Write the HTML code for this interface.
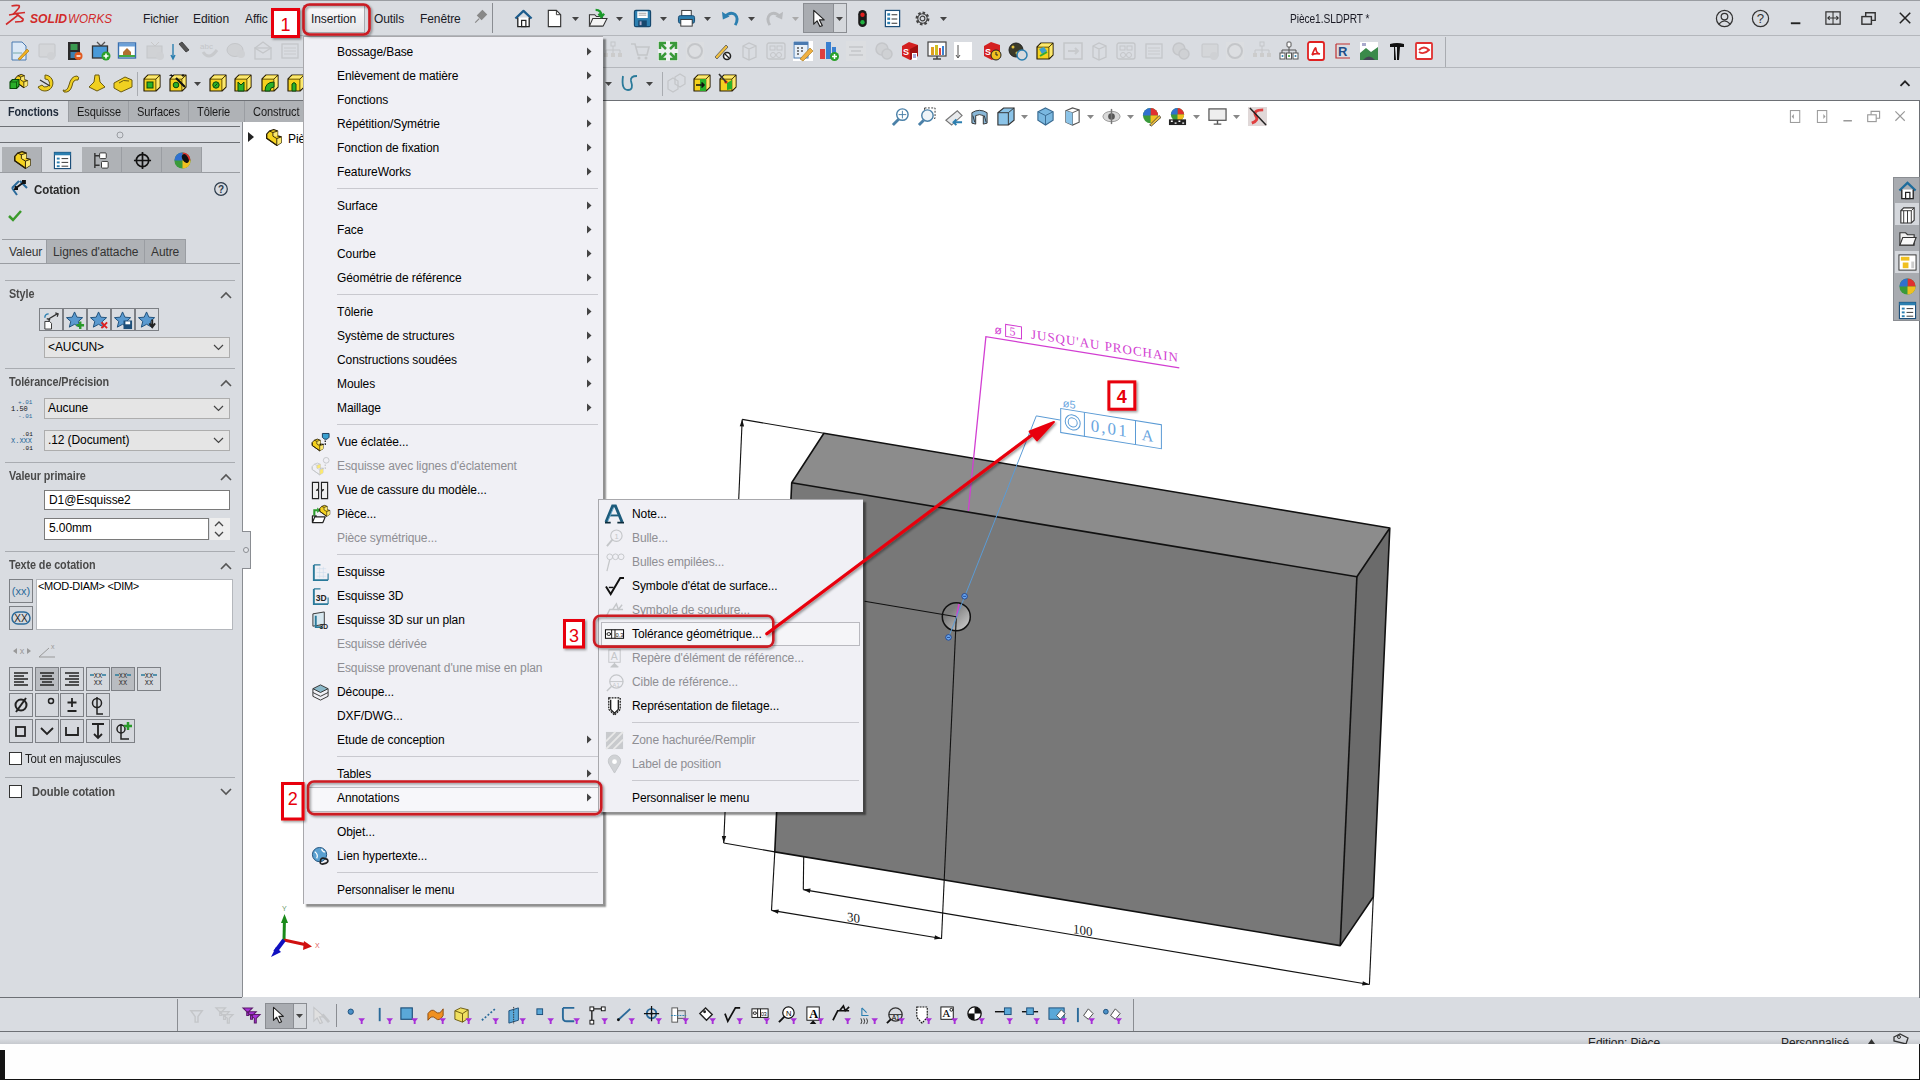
<!DOCTYPE html><html><head><meta charset="utf-8"><style>
html,body{margin:0;padding:0;width:1920px;height:1080px;overflow:hidden;background:#d9dce1;}
body{position:relative;font-family:"Liberation Sans",sans-serif;font-size:12px;color:#000;}
.t{position:absolute;white-space:nowrap;line-height:16px;letter-spacing:-0.1px;}
.b{font-weight:bold;}
svg{position:absolute;overflow:visible;}
</style></head><body>
<div style="position:absolute;left:0px;top:0px;width:1920px;height:1px;background:#9a9da2"></div>
<div style="position:absolute;left:0px;top:35px;width:1920px;height:1px;background:#b4b7bc"></div>
<div style="position:absolute;left:0px;top:67px;width:1920px;height:1px;background:#b4b7bc"></div>
<div style="position:absolute;left:0px;top:100px;width:1920px;height:1px;background:#6d7075"></div>
<div class="t" style="left:143px;top:10.84px;font-size:12px;color:#1a1a24">Fichier</div>
<div class="t" style="left:193px;top:10.84px;font-size:12px;color:#1a1a24">Edition</div>
<div class="t" style="left:245px;top:10.84px;font-size:12px;color:#1a1a24">Affic</div>
<div class="t" style="left:374px;top:10.84px;font-size:12px;color:#1a1a24">Outils</div>
<div class="t" style="left:420px;top:10.84px;font-size:12px;color:#1a1a24">Fenêtre</div>
<div class="t" style="left:1290px;top:10.84px;font-size:12px;color:#1a1a24;transform:scaleX(0.85);transform-origin:0 0">Pièce1.SLDPRT *</div>
<svg style="left:0px;top:0px;" width="120" height="35" viewBox="0 0 120 35"><path d="M11.5 6 Q15 5 19 5.5 Q20 7 18 9 L13 14.5" fill="none" stroke="#d12a2a" stroke-width="1.6"/>
<path d="M9 15 L17 13.5 Q18.5 14 17 16 L6 24.5" fill="none" stroke="#d12a2a" stroke-width="1.6"/>
<path d="M25 12.5 L16 13.5 L23 19 Q23.5 21 21 21.5 L15 22" fill="none" stroke="#d12a2a" stroke-width="1.7"/>
<text x="30" y="23" font-family="Liberation Sans" font-weight="bold" font-style="italic" font-size="12.5" fill="#d12a2a" textLength="37" lengthAdjust="spacingAndGlyphs">SOLID</text>
<text x="68" y="23" font-family="Liberation Sans" font-style="italic" font-size="12.5" fill="#d12a2a" textLength="44" lengthAdjust="spacingAndGlyphs">WORKS</text></svg>
<div style="position:absolute;left:243px;top:101px;width:1676px;height:896px;background:#fff"></div>
<div style="position:absolute;left:1919px;top:101px;width:1px;height:897px;background:#6d7075"></div>
<svg style="left:0;top:0" width="1920" height="1080" viewBox="0 0 1920 1080"><polygon points="823.9,433.3 1389.8,528.0 1356.9,576.7 791.7,482.8" fill="#8c8c8c"/><polygon points="791.7,482.8 1356.9,576.7 1340.2,945.6 774.8,851.9" fill="#787878"/><polygon points="1356.9,576.7 1389.8,528.0 1373.3,897.0 1340.2,945.6" fill="#6b6b6b"/><polyline points="791.7,482.8 823.9,433.3 1389.8,528.0 1373.3,897.0 1340.2,945.6 774.8,851.9 791.7,482.8 1356.9,576.7 1389.8,528.0" fill="none" stroke="#111" stroke-width="1.6" stroke-linejoin="round"/><line x1="1356.9" y1="576.7" x2="1340.2" y2="945.6" stroke="#111" stroke-width="1.6"/><defs><linearGradient id="cg" x1="0" y1="0" x2="1" y2="1"><stop offset="0.3" stop-color="#7c7c7c"/><stop offset="1" stop-color="#d4d4d4"/></linearGradient></defs><circle cx="956.3" cy="616.7" r="14" fill="url(#cg)" stroke="#111" stroke-width="1.5"/><polyline points="968.3,511 985.9,336.7 1179.3,367.8" fill="none" stroke="#d23ed2" stroke-width="1.3"/><line x1="956.5" y1="617" x2="959" y2="604" stroke="#d23ed2" stroke-width="1.5"/><g transform="translate(994,337.5) skewY(9.13)"><text x="0.5" y="-4" font-family="Liberation Sans" font-size="12" fill="#d23ed2">ø</text><rect x="11.6" y="-15" width="15.9" height="12" fill="none" stroke="#d23ed2" stroke-width="1"/><text x="15.5" y="-5" font-family="Liberation Serif" font-size="12" fill="#d23ed2">5</text><text x="37" y="-5" font-family="Liberation Serif" font-size="13" fill="#d23ed2" textLength="147" lengthAdjust="spacing">JUSQU'AU  PROCHAIN</text></g><line x1="823.9" y1="433.3" x2="742.2" y2="419.4" stroke="#111" stroke-width="1.1"/><line x1="742.2" y1="419.4" x2="723.7" y2="843" stroke="#111" stroke-width="1.1"/><line x1="723.7" y1="843" x2="774.8" y2="851.9" stroke="#111" stroke-width="1.1"/><polygon points="742.2,419.4 744.1,426.5 739.7,426.3" fill="#111"/><polygon points="723.7,843.0 721.8,835.9 726.2,836.1" fill="#111"/><line x1="774.8" y1="851.9" x2="771.5" y2="910.4" stroke="#111" stroke-width="1.1"/><line x1="771.5" y1="910.4" x2="941.5" y2="938.5" stroke="#111" stroke-width="1.1"/><polygon points="771.5,910.4 778.8,909.4 778.0,913.7" fill="#111"/><polygon points="941.5,938.5 934.2,939.5 935.0,935.2" fill="#111"/><line x1="956.3" y1="616.7" x2="941.5" y2="939" stroke="#111" stroke-width="1.1"/><line x1="803.7" y1="857" x2="803.3" y2="889.6" stroke="#111" stroke-width="1.1"/><line x1="803.3" y1="889.6" x2="1369.4" y2="984.5" stroke="#111" stroke-width="1.1"/><polygon points="803.3,889.6 810.6,888.6 809.8,892.9" fill="#111"/><polygon points="1369.4,984.5 1362.1,985.5 1362.9,981.2" fill="#111"/><line x1="1373.3" y1="897" x2="1369.4" y2="984.5" stroke="#111" stroke-width="1.1"/><line x1="864.6" y1="601.3" x2="956.3" y2="616.7" stroke="#111" stroke-width="1.1"/><text transform="translate(847,921) skewY(9.4)" font-family="Liberation Serif" font-size="13" fill="#222">30</text><text transform="translate(1073,933) skewY(9.4)" font-family="Liberation Serif" font-size="13" fill="#222">100</text><polyline points="948.5,637.4 1036.3,415.9 1060,420" fill="none" stroke="#5b9bd5" stroke-width="1"/><circle cx="964.6" cy="596.3" r="2.8" fill="#6aa8f0" stroke="#1d3f8a" stroke-width="0.9"/><line x1="963.1" y1="596.3" x2="966.1" y2="596.3" stroke="#1d3f8a" stroke-width="0.9"/><circle cx="948.5" cy="637.4" r="2.8" fill="#6aa8f0" stroke="#1d3f8a" stroke-width="0.9"/><line x1="947.0" y1="637.4" x2="950.0" y2="637.4" stroke="#1d3f8a" stroke-width="0.9"/><g transform="translate(1060.7,408.5) skewY(9.19)"><rect x="0" y="0" width="100.7" height="24" fill="none" stroke="#5b9bd5" stroke-width="1"/><line x1="23.7" y1="0" x2="23.7" y2="24" stroke="#5b9bd5"/><line x1="74.8" y1="0" x2="74.8" y2="24" stroke="#5b9bd5"/><circle cx="12" cy="12" r="7.5" fill="none" stroke="#5b9bd5"/><circle cx="12" cy="12" r="4.5" fill="none" stroke="#5b9bd5"/><text x="30" y="17.6" font-family="Liberation Serif" font-size="17" fill="#6aa6e0" textLength="36" lengthAdjust="spacing">0,01</text><text x="81" y="18.3" font-family="Liberation Serif" font-size="16" fill="#6aa6e0">A</text><text x="2" y="-2" font-family="Liberation Sans" font-size="11" fill="#6aa6e0">ø5</text></g><line x1="284" y1="940" x2="284.5" y2="918" stroke="#1a8a1a" stroke-width="3"/><polygon points="284.5,914 281,923 288,923" fill="#1a8a1a"/><line x1="284" y1="940" x2="307" y2="945" stroke="#d01010" stroke-width="3"/><polygon points="312,946.5 304,941 303,950" fill="#d01010"/><line x1="284" y1="940" x2="275" y2="952" stroke="#1010c0" stroke-width="4"/><polygon points="271,957 276,947 281,952" fill="#1010c0"/><text x="282" y="911" font-family="Liberation Sans" font-size="7" fill="#6a9a6a">Y</text><text x="315" y="948" font-family="Liberation Sans" font-size="7" fill="#e06060">X</text></svg>
<div style="position:absolute;left:0px;top:101px;width:243px;height:896px;background:#d9dce1"></div>
<div style="position:absolute;left:242px;top:122px;width:1px;height:875px;background:#8a8d92"></div>
<div style="position:absolute;left:242px;top:531px;width:9px;height:38px;background:#d9dce1;border:1px solid #8a8d92;border-left:none;box-sizing:border-box"></div>
<svg style="left:243px;top:547px;" width="6" height="6" viewBox="0 0 6 6"><circle cx="3" cy="3" r="2.5" fill="#e4e6ea" stroke="#8a8d92"/></svg>
<div class="t" style="left:8px;top:104.34px;font-size:12px;color:#1f2a3a;font-weight:bold;transform:scaleX(0.9);transform-origin:0 0">Fonctions</div>
<div style="position:absolute;left:68px;top:101px;width:60px;height:21px;background:#afb2b6;border-left:1px solid #9a9da2;box-sizing:border-box"></div>
<div class="t" style="left:77px;top:104.34px;font-size:12px;color:#1a1a1a;transform:scaleX(0.92);transform-origin:0 0">Esquisse</div>
<div style="position:absolute;left:128px;top:101px;width:60px;height:21px;background:#afb2b6;border-left:1px solid #9a9da2;box-sizing:border-box"></div>
<div class="t" style="left:137px;top:104.34px;font-size:12px;color:#1a1a1a;transform:scaleX(0.92);transform-origin:0 0">Surfaces</div>
<div style="position:absolute;left:188px;top:101px;width:56px;height:21px;background:#afb2b6;border-left:1px solid #9a9da2;box-sizing:border-box"></div>
<div class="t" style="left:197px;top:104.34px;font-size:12px;color:#1a1a1a;transform:scaleX(0.92);transform-origin:0 0">Tôlerie</div>
<div style="position:absolute;left:244px;top:101px;width:70px;height:21px;background:#afb2b6;border-left:1px solid #9a9da2;box-sizing:border-box"></div>
<div class="t" style="left:253px;top:104.34px;font-size:12px;color:#1a1a1a;transform:scaleX(0.92);transform-origin:0 0">Construct</div>
<svg style="left:247px;top:132px;" width="8" height="10" viewBox="0 0 8 10"><path d="M1 0 L7 5 L1 10 Z" fill="#222"/></svg>
<div class="t" style="left:288px;top:130.84px;font-size:12px;">Piè</div>
<div style="position:absolute;left:0px;top:126px;width:240px;height:1px;background:#6d7075"></div>
<svg style="left:116px;top:131px;" width="8" height="8" viewBox="0 0 8 8"><circle cx="4" cy="4" r="3" fill="none" stroke="#9a9da2"/></svg>
<div style="position:absolute;left:0px;top:142px;width:240px;height:1px;background:#6d7075"></div>
<div style="position:absolute;left:2px;top:147px;width:40px;height:26px;background:#afb2b6;border-right:1px solid #9a9da2;box-sizing:border-box"></div>
<div style="position:absolute;left:82px;top:147px;width:40px;height:26px;background:#afb2b6;border-right:1px solid #9a9da2;box-sizing:border-box"></div>
<div style="position:absolute;left:122px;top:147px;width:40px;height:26px;background:#afb2b6;border-right:1px solid #9a9da2;box-sizing:border-box"></div>
<div style="position:absolute;left:162px;top:147px;width:40px;height:26px;background:#afb2b6;border-right:1px solid #9a9da2;box-sizing:border-box"></div>
<div style="position:absolute;left:0px;top:172px;width:240px;height:1px;background:#9a9da2"></div>
<div class="t" style="left:34px;top:181.84px;font-size:12px;color:#2a2a2a;font-weight:bold;transform:scaleX(0.96);transform-origin:0 0">Cotation</div>
<svg style="left:214px;top:182px;" width="14" height="14" viewBox="0 0 14 14"><circle cx="7" cy="7" r="6.3" fill="none" stroke="#2b3a4a" stroke-width="1.2"/><text x="7" y="11" text-anchor="middle" font-family="Liberation Sans" font-weight="bold" font-size="10" fill="#2b3a4a">?</text></svg>
<svg style="left:8px;top:209px;" width="14" height="13" viewBox="0 0 14 13"><path d="M1 7 L5 11 L13 2" fill="none" stroke="#3a9a2a" stroke-width="2.5"/></svg>
<div style="position:absolute;left:0px;top:263px;width:240px;height:1px;background:#9a9da2"></div>
<div style="position:absolute;left:46px;top:239px;width:99px;height:24px;background:#afb2b6;border-left:1px solid #9a9da2;border-right:1px solid #9a9da2;border-top:1px solid #9a9da2;box-sizing:border-box"></div>
<div style="position:absolute;left:145px;top:239px;width:41px;height:24px;background:#afb2b6;border-right:1px solid #9a9da2;border-top:1px solid #9a9da2;box-sizing:border-box"></div>
<div style="position:absolute;left:2px;top:239px;width:44px;height:1px;background:#9a9da2"></div>
<div class="t" style="left:9px;top:243.84px;font-size:12px;color:#333">Valeur</div>
<div class="t" style="left:53px;top:243.84px;font-size:12px;color:#333">Lignes d'attache</div>
<div class="t" style="left:151px;top:243.84px;font-size:12px;color:#333">Autre</div>
<div style="position:absolute;left:5px;top:280px;width:230px;height:1px;background:#a9acb1"></div>
<div class="t" style="left:9px;top:286.34px;font-size:12px;color:#4a4a4a;font-weight:bold;transform:scaleX(0.9);transform-origin:0 0">Style</div>
<svg style="left:220px;top:290.5px;" width="12" height="8" viewBox="0 0 12 8"><path d="M1 7 L6 2 L11 7" fill="none" stroke="#555" stroke-width="1.6"/></svg>
<div style="position:absolute;left:5px;top:368px;width:230px;height:1px;background:#a9acb1"></div>
<div class="t" style="left:9px;top:374.34px;font-size:12px;color:#4a4a4a;font-weight:bold;transform:scaleX(0.9);transform-origin:0 0">Tolérance/Précision</div>
<svg style="left:220px;top:378.5px;" width="12" height="8" viewBox="0 0 12 8"><path d="M1 7 L6 2 L11 7" fill="none" stroke="#555" stroke-width="1.6"/></svg>
<div style="position:absolute;left:5px;top:462px;width:230px;height:1px;background:#a9acb1"></div>
<div class="t" style="left:9px;top:468.34px;font-size:12px;color:#4a4a4a;font-weight:bold;transform:scaleX(0.9);transform-origin:0 0">Valeur primaire</div>
<svg style="left:220px;top:472.5px;" width="12" height="8" viewBox="0 0 12 8"><path d="M1 7 L6 2 L11 7" fill="none" stroke="#555" stroke-width="1.6"/></svg>
<div style="position:absolute;left:5px;top:551px;width:230px;height:1px;background:#a9acb1"></div>
<div class="t" style="left:9px;top:557.34px;font-size:12px;color:#4a4a4a;font-weight:bold;transform:scaleX(0.9);transform-origin:0 0">Texte de cotation</div>
<svg style="left:220px;top:561.5px;" width="12" height="8" viewBox="0 0 12 8"><path d="M1 7 L6 2 L11 7" fill="none" stroke="#555" stroke-width="1.6"/></svg>
<div style="position:absolute;left:5px;top:777px;width:230px;height:1px;background:#a9acb1"></div>
<div class="t" style="left:9px;top:781.34px;font-size:12px;color:#4a4a4a;font-weight:bold;transform:scaleX(0.9);transform-origin:0 0"></div>
<svg style="left:220px;top:787.5px;" width="12" height="8" viewBox="0 0 12 8"><path d="M1 1 L6 6 L11 1" fill="none" stroke="#555" stroke-width="1.6"/></svg>
<div class="t" style="left:32px;top:783.84px;font-size:12px;color:#4a4a4a;font-weight:bold;transform:scaleX(0.93);transform-origin:0 0">Double cotation</div>
<div style="position:absolute;left:39px;top:308px;width:24px;height:23px;background:#d9dce1;border:1px solid #7d8085;box-sizing:border-box"></div>
<div style="position:absolute;left:63px;top:308px;width:24px;height:23px;background:#d9dce1;border:1px solid #7d8085;box-sizing:border-box"></div>
<div style="position:absolute;left:87px;top:308px;width:24px;height:23px;background:#d9dce1;border:1px solid #7d8085;box-sizing:border-box"></div>
<div style="position:absolute;left:111px;top:308px;width:24px;height:23px;background:#d9dce1;border:1px solid #7d8085;box-sizing:border-box"></div>
<div style="position:absolute;left:135px;top:308px;width:24px;height:23px;background:#d9dce1;border:1px solid #7d8085;box-sizing:border-box"></div>
<div style="position:absolute;left:44px;top:337px;width:186px;height:21px;background:#e5e5e5;border:1px solid #adadad;box-sizing:border-box"></div>
<div class="t" style="left:48px;top:339.34px;font-size:12px;color:#000">&lt;AUCUN&gt;</div>
<svg style="left:213px;top:344px;" width="11" height="7" viewBox="0 0 11 7"><path d="M1 1 L5.5 5.5 L10 1" fill="none" stroke="#444" stroke-width="1.2"/></svg>
<div style="position:absolute;left:44px;top:398px;width:186px;height:21px;background:#e5e5e5;border:1px solid #adadad;box-sizing:border-box"></div>
<div class="t" style="left:48px;top:400.34px;font-size:12px;color:#000">Aucune</div>
<svg style="left:213px;top:405px;" width="11" height="7" viewBox="0 0 11 7"><path d="M1 1 L5.5 5.5 L10 1" fill="none" stroke="#444" stroke-width="1.2"/></svg>
<div style="position:absolute;left:44px;top:430px;width:186px;height:21px;background:#e5e5e5;border:1px solid #adadad;box-sizing:border-box"></div>
<div class="t" style="left:48px;top:432.34px;font-size:12px;color:#000">.12 (Document)</div>
<svg style="left:213px;top:437px;" width="11" height="7" viewBox="0 0 11 7"><path d="M1 1 L5.5 5.5 L10 1" fill="none" stroke="#444" stroke-width="1.2"/></svg>
<div style="position:absolute;left:44px;top:490px;width:186px;height:20px;background:#fff;border:1px solid #7a7a7a;box-sizing:border-box"></div>
<div class="t" style="left:49px;top:491.84px;font-size:12px;">D1@Esquisse2</div>
<div style="position:absolute;left:44px;top:518px;width:165px;height:22px;background:#fff;border:1px solid #7a7a7a;box-sizing:border-box"></div>
<div class="t" style="left:49px;top:520.34px;font-size:12px;">5.00mm</div>
<div style="position:absolute;left:210px;top:518px;width:20px;height:22px;background:#eeeeee"></div>
<svg style="left:213px;top:520px;" width="12" height="18" viewBox="0 0 12 18"><path d="M2 6 L6 2 L10 6 M2 12 L6 16 L10 12" fill="none" stroke="#444" stroke-width="1.3"/></svg>
<svg style="left:10px;top:398px;" width="22" height="20" viewBox="0 0 22 20"><text x="8" y="6" font-family="Liberation Mono" font-size="6" fill="#2a6a9a">+.01</text><text x="1" y="13" font-family="Liberation Mono" font-size="7" fill="#111">1.50</text><text x="8" y="20" font-family="Liberation Mono" font-size="6" fill="#2a6a9a">-.01</text></svg>
<svg style="left:10px;top:430px;" width="22" height="20" viewBox="0 0 22 20"><text x="12" y="6" font-family="Liberation Mono" font-size="6" fill="#111">.01</text><text x="1" y="13" font-family="Liberation Mono" font-size="7" fill="#2a6a9a">X.XXX</text><text x="12" y="20" font-family="Liberation Mono" font-size="6" fill="#111">.01</text></svg>
<div style="position:absolute;left:9px;top:579px;width:24px;height:24px;background:#d5d8dd;border:1px solid #7d8085;box-sizing:border-box"></div>
<div style="position:absolute;left:9px;top:606px;width:24px;height:24px;background:#d5d8dd;border:1px solid #7d8085;box-sizing:border-box"></div>
<svg style="left:11px;top:583px;" width="20" height="16" viewBox="0 0 20 16"><text x="10" y="12" text-anchor="middle" font-family="Liberation Sans" font-size="11" fill="#2a6a9a">(xx)</text></svg>
<svg style="left:11px;top:610px;" width="20" height="16" viewBox="0 0 20 16"><rect x="1" y="2" width="18" height="12" rx="6" fill="none" stroke="#2a6a9a" stroke-width="1.5"/><text x="10" y="12" text-anchor="middle" font-family="Liberation Sans" font-size="10" fill="#222">XX</text></svg>
<div style="position:absolute;left:36px;top:579px;width:197px;height:51px;background:#fff;border:1px solid #b4b7bc;box-sizing:border-box"></div>
<div class="t" style="left:38px;top:578.19px;font-size:11px;font-size:11px;letter-spacing:-0.3px">&lt;MOD-DIAM&gt; &lt;DIM&gt;</div>
<svg style="left:12px;top:645px;" width="20" height="12" viewBox="0 0 20 12"><path d="M1 6 L5 3 L5 9 Z M19 6 L15 3 L15 9 Z" fill="#999"/><text x="10" y="9" text-anchor="middle" font-family="Liberation Sans" font-size="9" fill="#999">x</text></svg>
<svg style="left:37px;top:643px;" width="20" height="16" viewBox="0 0 20 16"><path d="M2 14 L18 14 M2 14 L12 5" stroke="#999" fill="none"/><text x="14" y="6" font-family="Liberation Sans" font-size="7" fill="#999">x</text></svg>
<div style="position:absolute;left:9px;top:667px;width:24px;height:24px;background:#d5d8dd;border:1px solid #7d8085;box-sizing:border-box"></div>
<svg style="left:9px;top:667px;" width="24" height="24" viewBox="0 0 24 24"><path d="M5 6h14M5 9h10M5 12h14M5 15h10M5 18h14" stroke="#222" stroke-width="1.5"/></svg>
<div style="position:absolute;left:35px;top:667px;width:24px;height:24px;background:#b9bcc1;border:1px solid #7d8085;box-sizing:border-box"></div>
<svg style="left:35px;top:667px;" width="24" height="24" viewBox="0 0 24 24"><path d="M5 6h14M7 9h10M5 12h14M7 15h10M5 18h14" stroke="#222" stroke-width="1.5"/></svg>
<div style="position:absolute;left:60px;top:667px;width:24px;height:24px;background:#d5d8dd;border:1px solid #7d8085;box-sizing:border-box"></div>
<svg style="left:60px;top:667px;" width="24" height="24" viewBox="0 0 24 24"><path d="M5 6h14M9 9h10M5 12h14M9 15h10M5 18h14" stroke="#222" stroke-width="1.5"/></svg>
<div style="position:absolute;left:86px;top:667px;width:24px;height:24px;background:#d5d8dd;border:1px solid #7d8085;box-sizing:border-box"></div>
<svg style="left:86px;top:667px;" width="24" height="24" viewBox="0 0 24 24"><text x="12" y="11" text-anchor="middle" font-family="Liberation Mono" font-size="7" fill="#333">XX</text><text x="12" y="18" text-anchor="middle" font-family="Liberation Mono" font-size="7" fill="#333">XX</text><path d="M4 8 L8 8 M16 8 L20 8" stroke="#2a7a9a" stroke-width="1.5"/></svg>
<div style="position:absolute;left:111px;top:667px;width:24px;height:24px;background:#b9bcc1;border:1px solid #7d8085;box-sizing:border-box"></div>
<svg style="left:111px;top:667px;" width="24" height="24" viewBox="0 0 24 24"><text x="12" y="11" text-anchor="middle" font-family="Liberation Mono" font-size="7" fill="#333">XX</text><text x="12" y="18" text-anchor="middle" font-family="Liberation Mono" font-size="7" fill="#333">XX</text><path d="M4 8 L8 8 M16 8 L20 8" stroke="#2a7a9a" stroke-width="1.5"/></svg>
<div style="position:absolute;left:137px;top:667px;width:24px;height:24px;background:#d5d8dd;border:1px solid #7d8085;box-sizing:border-box"></div>
<svg style="left:137px;top:667px;" width="24" height="24" viewBox="0 0 24 24"><text x="12" y="11" text-anchor="middle" font-family="Liberation Mono" font-size="7" fill="#333">XX</text><text x="12" y="18" text-anchor="middle" font-family="Liberation Mono" font-size="7" fill="#333">XX</text><path d="M4 8 L8 8 M16 8 L20 8" stroke="#2a7a9a" stroke-width="1.5"/></svg>
<div style="position:absolute;left:9px;top:693px;width:24px;height:24px;background:#d5d8dd;border:1px solid #7d8085;box-sizing:border-box"></div>
<svg style="left:9px;top:693px;" width="24" height="24" viewBox="0 0 24 24"><circle cx="12" cy="12" r="5.5" fill="none" stroke="#222" stroke-width="2"/><path d="M7 19 L17 5" stroke="#222" stroke-width="2"/></svg>
<div style="position:absolute;left:35px;top:693px;width:24px;height:24px;background:#d5d8dd;border:1px solid #7d8085;box-sizing:border-box"></div>
<svg style="left:35px;top:693px;" width="24" height="24" viewBox="0 0 24 24"><circle cx="16" cy="8" r="2.5" fill="none" stroke="#222" stroke-width="1.5"/></svg>
<div style="position:absolute;left:60px;top:693px;width:24px;height:24px;background:#d5d8dd;border:1px solid #7d8085;box-sizing:border-box"></div>
<svg style="left:60px;top:693px;" width="24" height="24" viewBox="0 0 24 24"><path d="M12 5 V14 M7.5 9.5 H16.5 M7.5 18 H16.5" stroke="#222" stroke-width="1.8"/></svg>
<div style="position:absolute;left:86px;top:693px;width:24px;height:24px;background:#d5d8dd;border:1px solid #7d8085;box-sizing:border-box"></div>
<svg style="left:86px;top:693px;" width="24" height="24" viewBox="0 0 24 24"><path d="M11 4 v17 h6" fill="none" stroke="#222" stroke-width="1.5"/><circle cx="11" cy="10" r="4.5" fill="none" stroke="#222" stroke-width="1.5"/></svg>
<div style="position:absolute;left:9px;top:719px;width:24px;height:24px;background:#d5d8dd;border:1px solid #7d8085;box-sizing:border-box"></div>
<svg style="left:9px;top:719px;" width="24" height="24" viewBox="0 0 24 24"><rect x="7" y="8" width="9" height="9" fill="none" stroke="#222" stroke-width="1.8"/></svg>
<div style="position:absolute;left:35px;top:719px;width:24px;height:24px;background:#d5d8dd;border:1px solid #7d8085;box-sizing:border-box"></div>
<svg style="left:35px;top:719px;" width="24" height="24" viewBox="0 0 24 24"><path d="M6 9 L12 15 L18 9" fill="none" stroke="#222" stroke-width="1.8"/></svg>
<div style="position:absolute;left:60px;top:719px;width:24px;height:24px;background:#d5d8dd;border:1px solid #7d8085;box-sizing:border-box"></div>
<svg style="left:60px;top:719px;" width="24" height="24" viewBox="0 0 24 24"><path d="M6 8 V16 H18 V8" fill="none" stroke="#222" stroke-width="1.8"/></svg>
<div style="position:absolute;left:86px;top:719px;width:24px;height:24px;background:#d5d8dd;border:1px solid #7d8085;box-sizing:border-box"></div>
<svg style="left:86px;top:719px;" width="24" height="24" viewBox="0 0 24 24"><path d="M6 5 H18 M12 5 V19 M8 15 L12 19 L16 15" fill="none" stroke="#222" stroke-width="1.8"/></svg>
<div style="position:absolute;left:111px;top:719px;width:24px;height:24px;background:#d5d8dd;border:1px solid #7d8085;box-sizing:border-box"></div>
<svg style="left:111px;top:719px;" width="24" height="24" viewBox="0 0 24 24"><path d="M10 5 v15 h8" fill="none" stroke="#222" stroke-width="1.5"/><circle cx="10" cy="10" r="4" fill="none" stroke="#222" stroke-width="1.5"/><path d="M17 3v8M13 7h8" stroke="#2a9a2a" stroke-width="2.5"/></svg>
<div style="position:absolute;left:9px;top:752px;width:13px;height:13px;background:#fff;border:1px solid #333;box-sizing:border-box"></div>
<div class="t" style="left:25px;top:751.34px;font-size:12px;color:#222;transform:scaleX(0.95);transform-origin:0 0">Tout en majuscules</div>
<div style="position:absolute;left:9px;top:785px;width:13px;height:13px;background:#fff;border:1px solid #333;box-sizing:border-box"></div>
<div style="position:absolute;left:0px;top:998px;width:1920px;height:33px;background:#d9dce1"></div>
<div style="position:absolute;left:0px;top:997px;width:242px;height:1px;background:#6d7075"></div>
<div style="position:absolute;left:0px;top:1031px;width:1920px;height:1px;background:#6d7075"></div>
<div style="position:absolute;left:0px;top:1032px;width:1920px;height:12px;background:linear-gradient(#d9dce1 55%,#c6c9ce)"></div>
<div class="t" style="left:1588px;top:1034.84px;font-size:12px;color:#222">Edition: Pièce</div>
<div class="t" style="left:1781px;top:1034.84px;font-size:12px;color:#222">Personnalisé</div>
<svg style="left:1868px;top:1039px;" width="7" height="5" viewBox="0 0 7 5"><path d="M0 5 L3.5 0 L7 5 Z" fill="#333"/></svg>
<svg style="left:1892px;top:1033px;" width="18" height="12" viewBox="0 0 18 12"><path d="M2 4 L8 1 L16 5 L14 11 L2 8 Z" fill="none" stroke="#333" stroke-width="1.3"/><circle cx="7" cy="4" r="1.5" fill="none" stroke="#333"/></svg>
<div style="position:absolute;left:0px;top:1044px;width:1920px;height:36px;background:#fefefe"></div>
<div style="position:absolute;left:0px;top:1050px;width:5px;height:30px;background:#141414"></div>
<div style="position:absolute;left:0px;top:1079px;width:1920px;height:1px;background:#141414"></div>
<div style="position:absolute;left:1919px;top:1044px;width:1px;height:36px;background:#141414"></div>
<svg style="left:472.0px;top:9.0px;" width="16" height="16" viewBox="0 0 20 20"><path d="M4 17 L9 12 M7 8 L13 2 L18 7 L12 13 Z" fill="#888" stroke="#888" stroke-width="1.5"/></svg>
<div style="position:absolute;left:492px;top:3px;width:1px;height:30px;background:#8a8d92"></div>
<svg style="left:513.5px;top:8.5px;" width="19" height="19" viewBox="0 0 20 20"><path d="M1.5 10 L10 2 L18.5 10" fill="none" stroke="#1d5c8c" stroke-width="2.4" stroke-linejoin="round"/><path d="M4 9 V18.5 H16 V9" fill="#fff" stroke="#222" stroke-width="1.4"/><rect x="8" y="12" width="4.5" height="6.5" fill="none" stroke="#222" stroke-width="1.3"/></svg>
<svg style="left:544.5px;top:8.5px;" width="19" height="19" viewBox="0 0 20 20"><path d="M3.5 1.5 H12 L16.5 6 V18.5 H3.5 Z" fill="#fff" stroke="#333" stroke-width="1.2"/><path d="M12 1.5 V6 H16.5" fill="none" stroke="#333"/></svg>
<svg style="left:587.5px;top:8.5px;" width="19" height="19" viewBox="0 0 20 20"><path d="M1.5 6 H7 L9 8 H15 V18 H1.5 Z" fill="#e8e8e8" stroke="#333" stroke-width="1.1"/><path d="M1.5 18 L5 10 H20 L16 18 Z" fill="#f4f4f4" stroke="#333" stroke-width="1.1"/><path d="M8 1 Q14 1 14 7 M11 5 L14 8.5 L17 5" fill="none" stroke="#1a9a2a" stroke-width="2.3"/></svg>
<svg style="left:632.5px;top:8.5px;" width="19" height="19" viewBox="0 0 20 20"><rect x="1.5" y="1.5" width="17" height="17" rx="1.5" fill="#2c7fb0" stroke="#16486e" stroke-width="1.2"/><rect x="4.5" y="2.5" width="11" height="7" fill="#fff"/><path d="M6 4.5h8M6 6.5h8" stroke="#888" stroke-width="0.8"/><rect x="5.5" y="12" width="9" height="6" fill="#16486e"/><rect x="7" y="13" width="2" height="4" fill="#aac"/></svg>
<svg style="left:676.5px;top:8.5px;" width="19" height="19" viewBox="0 0 20 20"><rect x="5" y="1.5" width="10" height="6" fill="#fff" stroke="#333"/><rect x="1.5" y="7" width="17" height="8" rx="2" fill="#2c7fb0" stroke="#16486e"/><rect x="4" y="11" width="12" height="7" fill="#fff" stroke="#333"/></svg>
<svg style="left:720.5px;top:8.5px;" width="19" height="19" viewBox="0 0 20 20"><path d="M4 8 Q10 2 15 6 Q19 10 15 17" fill="none" stroke="#2c7fb0" stroke-width="3"/><path d="M1 3 L2 11 L9 8 Z" fill="#2c7fb0"/></svg>
<svg style="left:764.5px;top:8.5px;" width="19" height="19" viewBox="0 0 20 20"><path d="M16 8 Q10 2 5 6 Q1 10 5 17" fill="none" stroke="#b9bbbe" stroke-width="3"/><path d="M19 3 L18 11 L11 8 Z" fill="#b9bbbe"/></svg>
<svg style="left:571.5px;top:17.0px" width="7" height="4" viewBox="0 0 7 4"><path d="M0 0 H7 L3.5 4 Z" fill="#444"/></svg>
<svg style="left:615.5px;top:17.0px" width="7" height="4" viewBox="0 0 7 4"><path d="M0 0 H7 L3.5 4 Z" fill="#444"/></svg>
<svg style="left:659.5px;top:17.0px" width="7" height="4" viewBox="0 0 7 4"><path d="M0 0 H7 L3.5 4 Z" fill="#444"/></svg>
<svg style="left:703.5px;top:17.0px" width="7" height="4" viewBox="0 0 7 4"><path d="M0 0 H7 L3.5 4 Z" fill="#444"/></svg>
<svg style="left:747.5px;top:17.0px" width="7" height="4" viewBox="0 0 7 4"><path d="M0 0 H7 L3.5 4 Z" fill="#444"/></svg>
<svg style="left:791.5px;top:17.0px" width="7" height="4" viewBox="0 0 7 4"><path d="M0 0 H7 L3.5 4 Z" fill="#aaa"/></svg>
<div style="position:absolute;left:803px;top:3px;width:44px;height:30px;background:#d5d8dc;border:1px solid #8a8d92;box-sizing:border-box"></div>
<div style="position:absolute;left:804px;top:4px;width:30px;height:28px;background:#a9acb1"></div>
<div style="position:absolute;left:833px;top:4px;width:1px;height:28px;background:#8a8d92"></div>
<svg style="left:808.5px;top:8.5px;" width="19" height="19" viewBox="0 0 20 20"><path d="M5 1.5 V16 L8.5 12.5 L11.5 18.5 L14 17.5 L11 11.5 H16 Z" fill="#fff" stroke="#222" stroke-width="1.2" stroke-linejoin="round"/></svg>
<svg style="left:835.5px;top:17.0px" width="7" height="4" viewBox="0 0 7 4"><path d="M0 0 H7 L3.5 4 Z" fill="#444"/></svg>
<svg style="left:852.5px;top:8.5px;" width="19" height="19" viewBox="0 0 20 20"><rect x="5.5" y="1" width="9" height="18" rx="4.5" fill="#1a1a1a"/><circle cx="10" cy="6" r="2.3" fill="#e02020"/><circle cx="10" cy="14" r="2.3" fill="#20b040"/></svg>
<svg style="left:882.5px;top:8.5px;" width="19" height="19" viewBox="0 0 20 20"><rect x="2.5" y="1.5" width="15" height="17" fill="#fff" stroke="#1d4f7a" stroke-width="1.3"/><rect x="4.5" y="4.5" width="3" height="2.5" fill="#2c7fb0"/><rect x="4.5" y="9" width="3" height="2.5" fill="#2c7fb0"/><rect x="4.5" y="13.5" width="3" height="2.5" fill="#2c7fb0"/><path d="M9 6h6M9 10.5h6M9 15h6" stroke="#333" stroke-width="1.2"/></svg>
<svg style="left:912.5px;top:8.5px;" width="19" height="19" viewBox="0 0 20 20"><circle cx="10" cy="10" r="6" fill="none" stroke="#444" stroke-width="2.6" stroke-dasharray="2.6 2"/><circle cx="10" cy="10" r="5" fill="none" stroke="#444" stroke-width="1.2"/><circle cx="10" cy="10" r="2.5" fill="none" stroke="#444" stroke-width="1.2"/></svg>
<svg style="left:939.5px;top:17.0px" width="7" height="4" viewBox="0 0 7 4"><path d="M0 0 H7 L3.5 4 Z" fill="#444"/></svg>
<svg style="left:1714.5px;top:8.5px;" width="19" height="19" viewBox="0 0 20 20"><circle cx="10" cy="10" r="8.5" fill="none" stroke="#333" stroke-width="1.3"/><circle cx="10" cy="8" r="3.5" fill="none" stroke="#333" stroke-width="1.3"/><path d="M4 16 Q10 9 16 16" fill="none" stroke="#333" stroke-width="1.3"/></svg>
<svg style="left:1750.5px;top:8.5px;" width="19" height="19" viewBox="0 0 20 20"><circle cx="10" cy="10" r="8.5" fill="none" stroke="#333" stroke-width="1.3"/><text x="10" y="15" text-anchor="middle" font-family="Liberation Sans" font-size="14" fill="#333">?</text></svg>
<svg style="left:1787.5px;top:8.5px;" width="19" height="19" viewBox="0 0 20 20"><path d="M3 15 H13" stroke="#222" stroke-width="2"/></svg>
<svg style="left:1823.5px;top:8.5px;" width="19" height="19" viewBox="0 0 20 20"><rect x="2" y="3" width="15" height="13" fill="none" stroke="#333" stroke-width="1.3"/><path d="M9.5 3 V16 M4 9.5 H15 M6 7.5 L4 9.5 L6 11.5 M13 7.5 L15 9.5 L13 11.5" fill="none" stroke="#333" stroke-width="1.1"/></svg>
<svg style="left:1859.5px;top:8.5px;" width="19" height="19" viewBox="0 0 20 20"><rect x="2" y="8" width="10" height="8" fill="none" stroke="#333" stroke-width="1.5"/><path d="M6 8 V4 H16 V12 H12" fill="none" stroke="#333" stroke-width="1.5"/></svg>
<svg style="left:1895.5px;top:8.5px;" width="19" height="19" viewBox="0 0 20 20"><path d="M4 4 L15 15 M15 4 L4 15" stroke="#222" stroke-width="1.6"/></svg>
<div style="position:absolute;left:303px;top:5px;width:62px;height:28px;background:linear-gradient(#fbfbfc,#e4e5e8);border:1px solid #a8abb0;box-sizing:border-box"></div>
<div class="t" style="left:311px;top:10.84px;font-size:12px;color:#1a1a24">Insertion</div>
<svg style="left:10.0px;top:41.0px;" width="20" height="20" viewBox="0 0 20 20"><path d="M2 1 H12 L16 5 V19 H2 Z" fill="#dbe8f6" stroke="#4a7ab0"/><path d="M3 12 H12" stroke="#7aa"/><path d="M8 18 L17 8 L19 10 L10 19 Z" fill="#f0b020" stroke="#a07010" stroke-width="0.6"/></svg>
<svg style="left:37.0px;top:41.0px;" width="20" height="20" viewBox="0 0 20 20"><rect x="2" y="3" width="16" height="13" rx="1" fill="#d4d6d9" stroke="#c4c6c9"/><circle cx="14" cy="15" r="4" fill="#cfd1d4"/></svg>
<svg style="left:64.0px;top:41.0px;" width="20" height="20" viewBox="0 0 20 20"><rect x="4" y="1" width="12" height="18" fill="#2a2a2a"/><rect x="6.5" y="3" width="7" height="6" fill="#3a9a50"/><rect x="6.5" y="11" width="7" height="6" fill="#3a80b0"/><circle cx="14.5" cy="15" r="4" fill="#e05a20"/><path d="M12.5 15h4" stroke="#fff" stroke-width="1.5"/></svg>
<svg style="left:91.0px;top:41.0px;" width="20" height="20" viewBox="0 0 20 20"><path d="M6 1 L10 5 L14 1" stroke="#555" fill="none" stroke-width="1.3"/><rect x="1.5" y="5" width="15" height="12" fill="#4a9ad8" stroke="#333" stroke-width="1.3"/><circle cx="15" cy="15" r="4.5" fill="#2aa02a"/><path d="M12.5 15h5M15 12.5v5" stroke="#fff" stroke-width="1.6"/></svg>
<svg style="left:117.0px;top:41.0px;" width="20" height="20" viewBox="0 0 20 20"><rect x="1.5" y="2" width="17" height="15" fill="#fff" stroke="#3a70b0" stroke-width="1.4"/><rect x="2" y="2.5" width="16" height="3" fill="#6aa0d8"/><path d="M6 11 L10 7 L14 11 V15 H6 Z" fill="#b07030"/><path d="M2 15 H18" stroke="#4a4" stroke-width="2"/></svg>
<svg style="left:145.0px;top:41.0px;" width="20" height="20" viewBox="0 0 20 20"><path d="M6 1 L10 5 L14 1" stroke="#c8c8c8" fill="none"/><rect x="2" y="5" width="15" height="12" fill="#d0d2d5" stroke="#c4c6c9"/><circle cx="15" cy="15" r="4" fill="#cfd1d4"/></svg>
<svg style="left:170.0px;top:41.0px;" width="20" height="20" viewBox="0 0 20 20"><path d="M3 3 V17 M1 14 L3 18 L5 14" stroke="#2c7fb0" fill="none" stroke-width="1.4"/><path d="M9 3 L12 1 L19 9 L16 11 Z" fill="#555" stroke="#333" stroke-width="0.8"/></svg>
<svg style="left:199.0px;top:41.0px;" width="20" height="20" viewBox="0 0 20 20"><text x="1" y="8" font-family="Liberation Sans" font-size="8" fill="#c4c6c9">abc</text><path d="M4 11 Q10 20 18 9" fill="none" stroke="#c8cacd" stroke-width="3"/></svg>
<svg style="left:226.0px;top:41.0px;" width="20" height="20" viewBox="0 0 20 20"><ellipse cx="9" cy="9" rx="8" ry="6.5" fill="#d0d2d5" stroke="#c4c6c9"/><circle cx="15" cy="13" r="4" fill="#cfd1d4"/></svg>
<svg style="left:253.0px;top:41.0px;" width="20" height="20" viewBox="0 0 20 20"><rect x="2" y="7" width="16" height="11" fill="none" stroke="#c4c6c9" stroke-width="1.3"/><path d="M2 7 L10 1 L18 7 L10 12 Z" fill="none" stroke="#c4c6c9" stroke-width="1.3"/></svg>
<svg style="left:280.0px;top:41.0px;" width="20" height="20" viewBox="0 0 20 20"><rect x="2" y="3" width="16" height="14" fill="none" stroke="#c4c6c9" stroke-width="1.3"/><path d="M4 7h12M4 10h12M4 13h12" stroke="#c8cacd"/></svg>
<svg style="left:603.0px;top:41.0px;" width="20" height="20" viewBox="0 0 20 20"><rect x="8" y="1" width="4" height="4" fill="none" stroke="#c4c6c9"/><path d="M10 5V9 M3 9H17 M3 9V12 M10 9V12 M17 9V12" stroke="#c4c6c9"/><rect x="1" y="12" width="4" height="4" fill="#ccc"/><rect x="8" y="12" width="4" height="4" fill="#ccc"/><rect x="15" y="12" width="4" height="4" fill="#ccc"/></svg>
<svg style="left:630.0px;top:41.0px;" width="20" height="20" viewBox="0 0 20 20"><path d="M1 3 H5 L8 14 H17 L19 6 H6" fill="none" stroke="#c4c6c9" stroke-width="1.6"/><circle cx="9" cy="17" r="1.5" fill="#c4c6c9"/><circle cx="16" cy="17" r="1.5" fill="#c4c6c9"/></svg>
<svg style="left:658.0px;top:41.0px;" width="20" height="20" viewBox="0 0 20 20"><rect x="0" y="0" width="20" height="20" fill="#fff" opacity="0.6"/><path d="M2 2 L8 8 M2 8 V2 H8" stroke="#3a9a3a" stroke-width="2.5" fill="none"/><path d="M18 2 L12 8 M12 2 H18 V8" stroke="#3a9a3a" stroke-width="2.5" fill="none"/><path d="M2 18 L8 12 M2 12 V18 H8" stroke="#3a9a3a" stroke-width="2.5" fill="none"/><path d="M18 18 L12 12 M12 18 H18 V12" stroke="#3a9a3a" stroke-width="2.5" fill="none"/></svg>
<svg style="left:685.0px;top:41.0px;" width="20" height="20" viewBox="0 0 20 20"><rect x="1" y="1" width="18" height="18" fill="#dcdee1"/><circle cx="10" cy="10" r="7" fill="none" stroke="#c4c6c9" stroke-width="2"/></svg>
<svg style="left:712.0px;top:41.0px;" width="20" height="20" viewBox="0 0 20 20"><path d="M3 16 L14 4 L16 6 L5 18 Z" fill="#f0c040" stroke="#555" stroke-width="0.8"/><circle cx="15" cy="15" r="3.5" fill="#fff" stroke="#222" stroke-width="1.6"/><path d="M13 13 L17 17" stroke="#222" stroke-width="1.3"/></svg>
<svg style="left:739.0px;top:41.0px;" width="20" height="20" viewBox="0 0 20 20"><path d="M4 5 L10 2 L17 5 V16 L10 19 L4 16 Z M4 5 L10 8 L17 5 M10 8 V19" fill="none" stroke="#c4c6c9" stroke-width="1.3"/></svg>
<svg style="left:766.0px;top:41.0px;" width="20" height="20" viewBox="0 0 20 20"><rect x="1" y="2" width="18" height="16" rx="2" fill="none" stroke="#c4c6c9" stroke-width="1.3"/><rect x="4" y="5" width="5" height="4" fill="none" stroke="#c4c6c9"/><rect x="11" y="5" width="5" height="4" fill="none" stroke="#c4c6c9"/><circle cx="7" cy="14" r="2.5" fill="none" stroke="#c4c6c9"/><circle cx="13" cy="14" r="2.5" fill="none" stroke="#c4c6c9"/></svg>
<svg style="left:793.0px;top:41.0px;" width="20" height="20" viewBox="0 0 20 20"><rect x="0" y="0" width="20" height="20" fill="#fff"/><rect x="1" y="1" width="14" height="16" fill="#e8f0f8" stroke="#4a7ab0"/><rect x="1" y="1" width="14" height="3" fill="#4a7ab0"/><path d="M4 7h2M8 7h2M4 10h2M8 10h2M4 13h2" stroke="#555" stroke-width="1.3"/><path d="M7 18 L17 7 L20 10 L10 20 Z" fill="#f0b040" stroke="#a07010" stroke-width="0.6"/></svg>
<svg style="left:819.0px;top:41.0px;" width="20" height="20" viewBox="0 0 20 20"><rect x="1" y="8" width="5" height="10" fill="#e04040"/><rect x="7" y="1" width="5" height="17" fill="#3a80d0"/><rect x="13" y="6" width="4" height="12" fill="#3a80d0"/><circle cx="15.5" cy="15.5" r="4.5" fill="#2aa02a"/><path d="M13 15.5h5M15.5 13v5" stroke="#fff" stroke-width="1.5"/></svg>
<svg style="left:846.0px;top:41.0px;" width="20" height="20" viewBox="0 0 20 20"><rect x="0" y="0" width="20" height="20" fill="#dcdee1"/><path d="M3 6h14M5 10h10M3 14h14" stroke="#c4c6c9" stroke-width="1.5"/></svg>
<svg style="left:874.0px;top:41.0px;" width="20" height="20" viewBox="0 0 20 20"><circle cx="8" cy="8" r="6" fill="#d0d2d5" stroke="#c4c6c9" stroke-width="1.5"/><circle cx="13" cy="13" r="5" fill="#cfd1d4" stroke="#c4c6c9" stroke-width="1.5"/></svg>
<svg style="left:900.0px;top:41.0px;" width="20" height="20" viewBox="0 0 20 20"><path d="M2 5 L9 1 L18 4 V15 L10 19 L2 15 Z" fill="#d42020"/><path d="M10 8 L18 4 V15 L10 19 Z" fill="#a01010"/><text x="3" y="14" font-family="Liberation Sans" font-weight="bold" font-size="9" fill="#fff">S</text><rect x="12" y="12" width="5" height="7" fill="#fff"/><path d="M13 14h3M13 16h3" stroke="#55a" /></svg>
<svg style="left:927.0px;top:41.0px;" width="20" height="20" viewBox="0 0 20 20"><rect x="1" y="1" width="18" height="14" fill="#fff" stroke="#444" stroke-width="1.2"/><rect x="4" y="6" width="3" height="8" fill="#e0a020"/><rect x="8" y="4" width="3" height="10" fill="#d0c020"/><rect x="12" y="7" width="2" height="7" fill="#e04040"/><rect x="15" y="5" width="2" height="9" fill="#3a80d0"/><path d="M6 18h8M10 15v3" stroke="#444" stroke-width="1.5"/></svg>
<svg style="left:953.0px;top:41.0px;" width="20" height="20" viewBox="0 0 20 20"><rect x="1" y="1" width="18" height="18" fill="#fff"/><path d="M5 4 V16 M3 14 L5 17 L7 14" stroke="#555" fill="none"/></svg>
<svg style="left:982.0px;top:41.0px;" width="20" height="20" viewBox="0 0 20 20"><path d="M2 5 L9 1 L18 4 V15 L10 19 L2 15 Z" fill="#d42020"/><text x="3" y="14" font-family="Liberation Sans" font-weight="bold" font-size="9" fill="#fff">S</text><circle cx="14" cy="14" r="5" fill="#f0c020" stroke="#222"/><path d="M14 11v3h2" stroke="#222" fill="none"/></svg>
<svg style="left:1008.0px;top:41.0px;" width="20" height="20" viewBox="0 0 20 20"><circle cx="8" cy="9" r="7" fill="#3a3a2a" stroke="#222"/><circle cx="5" cy="6" r="1.5" fill="#e0c040"/><circle cx="9" cy="12" r="1.5" fill="#e0c040"/><circle cx="14" cy="14" r="5" fill="#d8dadd" stroke="#2c7fb0" stroke-width="1.5"/></svg>
<svg style="left:1035.0px;top:41.0px;" width="20" height="20" viewBox="0 0 20 20"><path d="M2 6 L6 2 H18 V14 L14 18 H2 Z" fill="#f5d21e" stroke="#2a2008" stroke-width="1.2" stroke-linejoin="round"/><path d="M2 6 H14 L18 2 M14 6 V18" fill="none" stroke="#2a2008" stroke-width="0.9"/><path d="M14.5 6.3 L17.5 3.2 V13.8 L14.5 16.8 Z" fill="#fbe870"/><path d="M3 5.5 L6.3 2.6 H16.8 L13.8 5.5 Z" fill="#fbe870"/><path d="M4 8 L9 6 L12 10 L7 13 Z" fill="#3aa0d0"/><path d="M5 15 L12 11" stroke="#3a3" stroke-width="2"/></svg>
<svg style="left:1063.0px;top:41.0px;" width="20" height="20" viewBox="0 0 20 20"><rect x="1" y="2" width="18" height="16" fill="none" stroke="#c4c6c9" stroke-width="1.5"/><path d="M5 10 H15 M12 7 L15 10 L12 13" stroke="#c8cacd" stroke-width="2" fill="none"/></svg>
<svg style="left:1089.0px;top:41.0px;" width="20" height="20" viewBox="0 0 20 20"><path d="M4 5 L10 2 L17 5 V16 L10 19 L4 16 Z M4 5 L10 8 L17 5 M10 8 V19" fill="none" stroke="#c4c6c9" stroke-width="1.3"/></svg>
<svg style="left:1116.0px;top:41.0px;" width="20" height="20" viewBox="0 0 20 20"><rect x="1" y="2" width="18" height="16" rx="2" fill="none" stroke="#c4c6c9" stroke-width="1.3"/><rect x="4" y="5" width="5" height="4" fill="none" stroke="#c4c6c9"/><rect x="11" y="5" width="5" height="4" fill="none" stroke="#c4c6c9"/><circle cx="7" cy="14" r="2.5" fill="none" stroke="#c4c6c9"/><circle cx="13" cy="14" r="2.5" fill="none" stroke="#c4c6c9"/></svg>
<svg style="left:1144.0px;top:41.0px;" width="20" height="20" viewBox="0 0 20 20"><rect x="2" y="3" width="16" height="14" fill="none" stroke="#c4c6c9" stroke-width="1.3"/><path d="M4 7h12M4 10h12M4 13h12" stroke="#c8cacd"/></svg>
<svg style="left:1171.0px;top:41.0px;" width="20" height="20" viewBox="0 0 20 20"><circle cx="8" cy="8" r="6" fill="#d0d2d5" stroke="#c4c6c9" stroke-width="1.5"/><circle cx="13" cy="13" r="5" fill="#cfd1d4" stroke="#c4c6c9" stroke-width="1.5"/></svg>
<svg style="left:1200.0px;top:41.0px;" width="20" height="20" viewBox="0 0 20 20"><rect x="2" y="3" width="16" height="13" rx="1" fill="#d4d6d9" stroke="#c4c6c9"/><circle cx="14" cy="15" r="4" fill="#cfd1d4"/></svg>
<svg style="left:1225.0px;top:41.0px;" width="20" height="20" viewBox="0 0 20 20"><rect x="1" y="1" width="18" height="18" fill="#dcdee1"/><circle cx="10" cy="10" r="7" fill="none" stroke="#c4c6c9" stroke-width="2"/></svg>
<svg style="left:1252.0px;top:41.0px;" width="20" height="20" viewBox="0 0 20 20"><rect x="8" y="1" width="4" height="4" fill="none" stroke="#c4c6c9"/><path d="M10 5V9 M3 9H17 M3 9V12 M10 9V12 M17 9V12" stroke="#c4c6c9"/><rect x="1" y="12" width="4" height="4" fill="#ccc"/><rect x="8" y="12" width="4" height="4" fill="#ccc"/><rect x="15" y="12" width="4" height="4" fill="#ccc"/></svg>
<svg style="left:1279.0px;top:41.0px;" width="20" height="20" viewBox="0 0 20 20"><rect x="8" y="1" width="4" height="5" rx="1" fill="#fff" stroke="#555"/><path d="M10 6V9 M3 9H17 M3 9V12 M10 9V12 M17 9V12" stroke="#555"/><rect x="1" y="12" width="5" height="6" fill="#fff" stroke="#555"/><rect x="7.5" y="12" width="5" height="6" fill="#fff" stroke="#555"/><rect x="14" y="12" width="5" height="6" fill="#fff" stroke="#555"/><circle cx="3.5" cy="15" r="1" fill="#2c7fb0"/><circle cx="10" cy="15" r="1" fill="#2aa02a"/><circle cx="16.5" cy="15" r="1" fill="#2c7fb0"/></svg>
<svg style="left:1306.0px;top:41.0px;" width="20" height="20" viewBox="0 0 20 20"><rect x="2" y="1" width="16" height="18" rx="2" fill="#fff" stroke="#e02020" stroke-width="1.8"/><path d="M6 14 Q10 4 10 8 Q10 12 14 13 Q9 12 6 14" fill="none" stroke="#e02020" stroke-width="1.6"/></svg>
<svg style="left:1333.0px;top:41.0px;" width="20" height="20" viewBox="0 0 20 20"><path d="M3 3 H17 M3 3 V17 H17" stroke="#c03030" stroke-width="1.2" fill="none"/><text x="5" y="15" font-family="Liberation Sans" font-weight="bold" font-size="13" fill="#1d4f8a">R</text></svg>
<svg style="left:1359.0px;top:41.0px;" width="20" height="20" viewBox="0 0 20 20"><rect x="1" y="1" width="18" height="18" fill="#fff"/><path d="M1 12 L7 7 L12 11 L19 6 V19 H1 Z" fill="#3a8a4a"/><path d="M4 19 Q10 12 16 19" fill="#445"/><rect x="3" y="2" width="4" height="3" fill="#aac"/></svg>
<svg style="left:1387.0px;top:41.0px;" width="20" height="20" viewBox="0 0 20 20"><path d="M3 3 Q10 1 17 3 V6 H13 L12 19 H10 L10 6 H8 L9 19 H7 L7 6 H3 Z" fill="#111"/></svg>
<svg style="left:1414.0px;top:41.0px;" width="20" height="20" viewBox="0 0 20 20"><rect x="2" y="2" width="16" height="16" rx="1" fill="#fff" stroke="#e03030" stroke-width="1.8"/><path d="M5 9 Q10 4 15 9 Q10 14 5 11" fill="none" stroke="#e03030" stroke-width="1.8"/></svg>
<div style="position:absolute;left:1445px;top:37px;width:1px;height:30px;background:#a9acb1"></div>
<svg style="left:9.0px;top:73.0px;" width="20" height="20" viewBox="0 0 20 20"><g transform="translate(5,1) scale(0.75)"><path d="M1.8 5.8 L4.9 2.3 L9.7 0.6 L14 2.3 V7.6 L18.1 8.8 V15.1 L13.1 18.2 L1.8 10.2 Z" fill="#f5d21e" stroke="#2a2008" stroke-width="1.3" stroke-linejoin="round"/><path d="M13.1 10.6 L18.1 8.8 V15.1 L13.1 18.2 Z" fill="#fbe870"/><path d="M8.8 3.9 L14 2.3 V7.6 L8.8 9 Z" fill="#fbe870"/><path d="M4.9 2.3 L8.8 3.9 V8 L13.1 10.6 V18.2 M13.1 10.6 L18.1 8.8 M8.8 3.9 L14 2.3" fill="none" stroke="#2a2008" stroke-width="1"/><path d="M1.8 5.8 L1.8 10.2 L13.1 18.2 V18.6" fill="none" stroke="#2a2008" stroke-width="1.3"/></g><path d="M1 9 L3.5 6.5 H10 V13 L7.5 15.5 H1 Z" fill="#2ab02a" stroke="#0a4a0a" stroke-width="1.1" stroke-linejoin="round"/><path d="M1 9 H7.5 L10 6.5 M7.5 9 V15.5" fill="none" stroke="#0a4a0a" stroke-width="0.8"/></svg>
<svg style="left:35.0px;top:73.0px;" width="20" height="20" viewBox="0 0 20 20"><path d="M10 2 A8 8 0 1 1 3 14 L7 12 A4 4 0 1 0 10 6 Z" fill="#f0d020" stroke="#6a5a10"/><path d="M5 7 L15 13" stroke="#333" stroke-width="1.3"/></svg>
<svg style="left:61.0px;top:73.0px;" width="20" height="20" viewBox="0 0 20 20"><path d="M2 17 Q6 19 8 12 Q10 3 16 3 Q19 4 17 7 Q12 6 11 13 Q9 20 3 19 Z" fill="#f0d020" stroke="#6a5a10"/></svg>
<svg style="left:87.0px;top:73.0px;" width="20" height="20" viewBox="0 0 20 20"><path d="M8 2 H12 L13 9 L18 14 L10 18 L2 14 L7 9 Z" fill="#f0d020" stroke="#6a5a10"/></svg>
<svg style="left:113.0px;top:73.0px;" width="20" height="20" viewBox="0 0 20 20"><path d="M1 10 L12 4 L19 7 V14 L8 19 L1 15 Z" fill="#f0d020" stroke="#6a5a10"/><path d="M6 10 Q10 6 16 8" fill="none" stroke="#6a5a10"/></svg>
<svg style="left:142.0px;top:73.0px;" width="20" height="20" viewBox="0 0 20 20"><path d="M2 6 L6 2 H18 V14 L14 18 H2 Z" fill="#f5d21e" stroke="#2a2008" stroke-width="1.2" stroke-linejoin="round"/><path d="M2 6 H14 L18 2 M14 6 V18" fill="none" stroke="#2a2008" stroke-width="0.9"/><path d="M14.5 6.3 L17.5 3.2 V13.8 L14.5 16.8 Z" fill="#fbe870"/><path d="M3 5.5 L6.3 2.6 H16.8 L13.8 5.5 Z" fill="#fbe870"/><rect x="5" y="9" width="6" height="6" fill="#2ab02a" stroke="#0a4a0a"/></svg>
<svg style="left:168.0px;top:73.0px;" width="20" height="20" viewBox="0 0 20 20"><path d="M2 6 L6 2 H18 V14 L14 18 H2 Z" fill="#f5d21e" stroke="#2a2008" stroke-width="1.2" stroke-linejoin="round"/><path d="M2 6 H14 L18 2 M14 6 V18" fill="none" stroke="#2a2008" stroke-width="0.9"/><path d="M14.5 6.3 L17.5 3.2 V13.8 L14.5 16.8 Z" fill="#fbe870"/><path d="M3 5.5 L6.3 2.6 H16.8 L13.8 5.5 Z" fill="#fbe870"/><circle cx="8" cy="12" r="2.8" fill="#2ab02a" stroke="#0a4a0a"/><path d="M8 5 L17 14" stroke="#111" stroke-width="2.2"/><path d="M3 1 L4 4 M1.5 2.5 L5.5 2.5 M15 1v3M13.5 2.5h3" stroke="#111" stroke-width="0.9"/></svg>
<svg style="left:208.0px;top:73.0px;" width="20" height="20" viewBox="0 0 20 20"><path d="M2 6 L6 2 H18 V14 L14 18 H2 Z" fill="#f5d21e" stroke="#2a2008" stroke-width="1.2" stroke-linejoin="round"/><path d="M2 6 H14 L18 2 M14 6 V18" fill="none" stroke="#2a2008" stroke-width="0.9"/><path d="M14.5 6.3 L17.5 3.2 V13.8 L14.5 16.8 Z" fill="#fbe870"/><path d="M3 5.5 L6.3 2.6 H16.8 L13.8 5.5 Z" fill="#fbe870"/><circle cx="8" cy="12" r="3.2" fill="#2ab02a" stroke="#0a4a0a"/><path d="M6.5 13.5 L9.5 10.5" stroke="#0a4a0a"/></svg>
<svg style="left:233.0px;top:73.0px;" width="20" height="20" viewBox="0 0 20 20"><path d="M2 6 L6 2 H18 V14 L14 18 H2 Z" fill="#f5d21e" stroke="#2a2008" stroke-width="1.2" stroke-linejoin="round"/><path d="M2 6 H14 L18 2 M14 6 V18" fill="none" stroke="#2a2008" stroke-width="0.9"/><path d="M14.5 6.3 L17.5 3.2 V13.8 L14.5 16.8 Z" fill="#fbe870"/><path d="M3 5.5 L6.3 2.6 H16.8 L13.8 5.5 Z" fill="#fbe870"/><path d="M5 18 V9 L8 12 L11 9 V18 Z" fill="#2ab02a" stroke="#0a4a0a"/></svg>
<svg style="left:260.0px;top:73.0px;" width="20" height="20" viewBox="0 0 20 20"><path d="M2 6 L6 2 H18 V14 L14 18 H2 Z" fill="#f5d21e" stroke="#2a2008" stroke-width="1.2" stroke-linejoin="round"/><path d="M2 6 H14 L18 2 M14 6 V18" fill="none" stroke="#2a2008" stroke-width="0.9"/><path d="M14.5 6.3 L17.5 3.2 V13.8 L14.5 16.8 Z" fill="#fbe870"/><path d="M3 5.5 L6.3 2.6 H16.8 L13.8 5.5 Z" fill="#fbe870"/><path d="M5 18 Q5 9 14 9 V14 Q10 14 10 18 Z" fill="#2ab02a" stroke="#0a4a0a"/></svg>
<svg style="left:286.0px;top:73.0px;" width="20" height="20" viewBox="0 0 20 20"><path d="M2 6 L6 2 H18 V14 L14 18 H2 Z" fill="#f5d21e" stroke="#2a2008" stroke-width="1.2" stroke-linejoin="round"/><path d="M2 6 H14 L18 2 M14 6 V18" fill="none" stroke="#2a2008" stroke-width="0.9"/><path d="M14.5 6.3 L17.5 3.2 V13.8 L14.5 16.8 Z" fill="#fbe870"/><path d="M3 5.5 L6.3 2.6 H16.8 L13.8 5.5 Z" fill="#fbe870"/><path d="M6 18 V11 Q8 8 10 11 V18 Z" fill="#2ab02a" stroke="#0a4a0a"/></svg>
<svg style="left:620.0px;top:73.0px;" width="20" height="20" viewBox="0 0 20 20"><path d="M3 3 Q1 17 8 17 Q14 17 11 8 Q10 3 17 3" fill="none" stroke="#2a7a9a" stroke-width="1.8"/></svg>
<svg style="left:666.0px;top:73.0px;" width="20" height="20" viewBox="0 0 20 20"><path d="M2 8 L7 5 L12 8 V16 L7 19 L2 16 Z" fill="none" stroke="#c4c6c9" stroke-width="1.3"/><path d="M9 4 L14 1 L19 4 V11 L14 14 L9 11 Z" fill="none" stroke="#c4c6c9" stroke-width="1.3"/></svg>
<svg style="left:692.0px;top:73.0px;" width="20" height="20" viewBox="0 0 20 20"><path d="M2 6 L6 2 H18 V14 L14 18 H2 Z" fill="#f5d21e" stroke="#2a2008" stroke-width="1.2" stroke-linejoin="round"/><path d="M2 6 H14 L18 2 M14 6 V18" fill="none" stroke="#2a2008" stroke-width="0.9"/><path d="M14.5 6.3 L17.5 3.2 V13.8 L14.5 16.8 Z" fill="#fbe870"/><path d="M3 5.5 L6.3 2.6 H16.8 L13.8 5.5 Z" fill="#fbe870"/><path d="M8 6 H14 V18 H8 Z" fill="#2ab02a"/><path d="M4 12 H12 M9.5 9.5 L12 12 L9.5 14.5" stroke="#111" stroke-width="1.5" fill="none"/></svg>
<svg style="left:718.0px;top:73.0px;" width="20" height="20" viewBox="0 0 20 20"><path d="M2 6 L6 2 H18 V14 L14 18 H2 Z" fill="#f5d21e" stroke="#2a2008" stroke-width="1.2" stroke-linejoin="round"/><path d="M2 6 H14 L18 2 M14 6 V18" fill="none" stroke="#2a2008" stroke-width="0.9"/><path d="M14.5 6.3 L17.5 3.2 V13.8 L14.5 16.8 Z" fill="#fbe870"/><path d="M3 5.5 L6.3 2.6 H16.8 L13.8 5.5 Z" fill="#fbe870"/><path d="M9 10 L14 7 V16 L9 17 Z" fill="#2ab02a"/><circle cx="8" cy="9" r="1.6" fill="#d02020"/><path d="M1 1 L8 9" stroke="#333" stroke-width="1.6"/></svg>
<div style="position:absolute;left:137px;top:72px;width:1px;height:24px;background:#a9acb1"></div>
<div style="position:absolute;left:662px;top:72px;width:1px;height:24px;background:#a9acb1"></div>
<svg style="left:193.5px;top:82.0px" width="7" height="4" viewBox="0 0 7 4"><path d="M0 0 H7 L3.5 4 Z" fill="#444"/></svg>
<svg style="left:604.5px;top:82.0px" width="7" height="4" viewBox="0 0 7 4"><path d="M0 0 H7 L3.5 4 Z" fill="#444"/></svg>
<svg style="left:645.5px;top:82.0px" width="7" height="4" viewBox="0 0 7 4"><path d="M0 0 H7 L3.5 4 Z" fill="#444"/></svg>
<svg style="left:1896.0px;top:75.0px;" width="18" height="18" viewBox="0 0 20 20"><path d="M5 12 L10 7 L15 12" fill="none" stroke="#222" stroke-width="2"/></svg>
<svg style="left:890.5px;top:106.5px;" width="19" height="19" viewBox="0 0 20 20"><circle cx="12" cy="8" r="6" fill="#fff" stroke="#4a80a8" stroke-width="1.5"/><path d="M8 13 L2 19" stroke="#4a80a8" stroke-width="3"/><path d="M12 4v8M8 8h8" stroke="#4a80a8"/></svg>
<svg style="left:916.5px;top:106.5px;" width="19" height="19" viewBox="0 0 20 20"><rect x="8" y="1" width="11" height="11" fill="none" stroke="#333" stroke-dasharray="2 1.5"/><circle cx="11" cy="9" r="6" fill="#eef4f8" stroke="#4a80a8" stroke-width="1.5"/><path d="M7 14 L2 19" stroke="#4a80a8" stroke-width="3"/></svg>
<svg style="left:943.5px;top:106.5px;" width="19" height="19" viewBox="0 0 20 20"><path d="M2 14 L14 4 L19 9 L8 19 Z" fill="#e8eaec" stroke="#777" stroke-width="1.2"/><path d="M19 16 H10 M13 13 L10 16 L13 19" stroke="#2c7fb0" stroke-width="2" fill="none"/></svg>
<svg style="left:969.5px;top:106.5px;" width="19" height="19" viewBox="0 0 20 20"><path d="M2 6 Q10 1 18 6 V17 L14 18 V9 Q10 7 6 9 V18 L2 17 Z" fill="#8ab8d8" stroke="#333"/><path d="M3 9 L5 16 M15 9 L17 16" stroke="#333"/></svg>
<svg style="left:995.5px;top:106.5px;" width="19" height="19" viewBox="0 0 20 20"><path d="M2 6 L8 1 H19 V14 L13 19 H2 Z" fill="#8cc4e8" stroke="#333" stroke-width="1.2"/><path d="M2 6 H13 V19 M13 6 L19 1" stroke="#333" fill="none"/></svg>
<svg style="left:1035.5px;top:106.5px;" width="19" height="19" viewBox="0 0 20 20"><path d="M10 1 L18 5 V14 L10 19 L2 14 V5 Z" fill="#7ab8e0" stroke="#3a6a90" stroke-width="1.2"/><path d="M2 5 L10 9 L18 5 M10 9 V19" stroke="#3a6a90" fill="none"/></svg>
<svg style="left:1062.5px;top:106.5px;" width="19" height="19" viewBox="0 0 20 20"><path d="M3 4 L10 1 L17 3 V16 L10 19 L3 16 Z" fill="#fff" stroke="#555" stroke-width="1.2"/><path d="M3 4 L10 6 L17 3 M10 6 V19" stroke="#555" fill="none"/><path d="M3 4 L10 6 V19 L3 16 Z" fill="#8cc4e8"/></svg>
<svg style="left:1101.5px;top:106.5px;" width="19" height="19" viewBox="0 0 20 20"><ellipse cx="10" cy="10" rx="9" ry="5.5" fill="#d8d8d8" stroke="#999"/><circle cx="10" cy="10" r="3.5" fill="#555"/><path d="M10 2 V18" stroke="#777" stroke-width="1.5"/></svg>
<svg style="left:1141.5px;top:106.5px;" width="19" height="19" viewBox="0 0 20 20"><circle cx="9" cy="9" r="8" fill="#3a9a3a"/><path d="M9 9 L9 1 A8 8 0 0 1 17 9 Z" fill="#e03030"/><path d="M9 9 L1 9 A8 8 0 0 1 9 1 Z" fill="#3070d0"/><path d="M9 9 L17 9 A8 8 0 0 1 9 17 Z" fill="#f0c020"/><path d="M8 19 L18 9 L20 11 L10 20 Z" fill="#f0c040" stroke="#333" stroke-width="0.8"/></svg>
<svg style="left:1167.5px;top:106.5px;" width="19" height="19" viewBox="0 0 20 20"><circle cx="10" cy="8" r="7" fill="#3a9a3a"/><path d="M10 8 L10 1 A7 7 0 0 1 17 8 Z" fill="#e03030"/><path d="M10 8 L3 8 A7 7 0 0 1 10 1 Z" fill="#3070d0"/><path d="M10 8 L17 8 A7 7 0 0 1 10 15 Z" fill="#f0c020"/><rect x="1" y="13" width="18" height="6" fill="#222"/><path d="M3 15h2M7 17h2M11 15h2M15 17h2" stroke="#fff" stroke-width="1.5"/></svg>
<svg style="left:1207.5px;top:106.5px;" width="19" height="19" viewBox="0 0 20 20"><rect x="1" y="2" width="18" height="12" fill="#eee" stroke="#555" stroke-width="1.3"/><path d="M10 14 V18 M6 18 H14" stroke="#555" stroke-width="1.5"/></svg>
<svg style="left:1247.5px;top:106.5px;" width="19" height="19" viewBox="0 0 20 20"><rect x="0" y="0" width="20" height="20" fill="#e0d8d8"/><path d="M16 3 Q5 3 8 9 Q12 14 4 17" fill="none" stroke="#e04040" stroke-width="3"/><path d="M2 1 L19 19" stroke="#222" stroke-width="1.6"/></svg>
<svg style="left:1020.5px;top:115.0px" width="7" height="4" viewBox="0 0 7 4"><path d="M0 0 H7 L3.5 4 Z" fill="#888"/></svg>
<svg style="left:1086.5px;top:115.0px" width="7" height="4" viewBox="0 0 7 4"><path d="M0 0 H7 L3.5 4 Z" fill="#888"/></svg>
<svg style="left:1126.5px;top:115.0px" width="7" height="4" viewBox="0 0 7 4"><path d="M0 0 H7 L3.5 4 Z" fill="#888"/></svg>
<svg style="left:1192.5px;top:115.0px" width="7" height="4" viewBox="0 0 7 4"><path d="M0 0 H7 L3.5 4 Z" fill="#888"/></svg>
<svg style="left:1232.5px;top:115.0px" width="7" height="4" viewBox="0 0 7 4"><path d="M0 0 H7 L3.5 4 Z" fill="#888"/></svg>
<svg style="left:1786.5px;top:107.5px;" width="17" height="17" viewBox="0 0 20 20"><rect x="4" y="3" width="11" height="14" fill="none" stroke="#999" stroke-width="1.2"/><path d="M8 7 L5.5 10 L8 13 Z" fill="#999"/></svg>
<svg style="left:1813.5px;top:107.5px;" width="17" height="17" viewBox="0 0 20 20"><rect x="4" y="3" width="11" height="14" fill="none" stroke="#999" stroke-width="1.2"/><path d="M11 7 L13.5 10 L11 13 Z" fill="#999"/></svg>
<svg style="left:1839.5px;top:107.5px;" width="17" height="17" viewBox="0 0 20 20"><path d="M4 15 H14" stroke="#999" stroke-width="1.8"/></svg>
<svg style="left:1865.5px;top:107.5px;" width="17" height="17" viewBox="0 0 20 20"><rect x="2" y="8" width="10" height="8" fill="none" stroke="#999" stroke-width="1.3"/><path d="M6 8 V4 H16 V12 H12" fill="none" stroke="#999" stroke-width="1.3"/></svg>
<svg style="left:1891.5px;top:107.5px;" width="17" height="17" viewBox="0 0 20 20"><path d="M4 4 L15 15 M15 4 L4 15" stroke="#999" stroke-width="1.4"/></svg>
<div style="position:absolute;left:1893px;top:177px;width:27px;height:144px;background:#a8abb0;border:1px solid #8a8d92;box-sizing:border-box"></div>
<svg style="left:1897.5px;top:180.5px;" width="19" height="19" viewBox="0 0 20 20"><path d="M1.5 10 L10 2 L18.5 10" fill="none" stroke="#1d6c9c" stroke-width="2.4"/><path d="M4 9 V18.5 H16 V9" fill="#fff" stroke="#222" stroke-width="1.4"/><rect x="8" y="12" width="4.5" height="6.5" fill="none" stroke="#222" stroke-width="1.3"/></svg>
<div style="position:absolute;left:1895px;top:203px;width:24px;height:22px;background:#d4d7dc"></div>
<svg style="left:1897.5px;top:204.5px;" width="19" height="19" viewBox="0 0 20 20"><path d="M3 6 L6 3 L17 3 V16 L14 19 H3 Z" fill="#fff" stroke="#333" stroke-width="1.2"/><path d="M6 6 V19 M10 6 V19 M14 6 V19 M3 6 H14 L17 3" stroke="#333" fill="none"/></svg>
<svg style="left:1897.5px;top:228.5px;" width="19" height="19" viewBox="0 0 20 20"><path d="M2 4 H8 L10 6 H17 V17 H2 Z" fill="#eee" stroke="#333" stroke-width="1.2"/><path d="M2 17 L5 9 H19 L16 17 Z" fill="#f8f8f8" stroke="#333" stroke-width="1.2"/></svg>
<div style="position:absolute;left:1895px;top:251px;width:24px;height:22px;background:#d4d7dc"></div>
<svg style="left:1897.5px;top:252.5px;" width="19" height="19" viewBox="0 0 20 20"><rect x="1" y="2" width="18" height="16" fill="#fff" stroke="#333"/><rect x="3" y="4" width="9" height="4" fill="#f0c020"/><rect x="5" y="10" width="6" height="6" fill="#f0c020"/><rect x="14" y="9" width="3" height="7" fill="#ccc"/></svg>
<svg style="left:1897.5px;top:276.5px;" width="19" height="19" viewBox="0 0 20 20"><circle cx="10" cy="10" r="8.5" fill="#3a9a3a"/><path d="M10 10 L10 1.5 A8.5 8.5 0 0 1 18.5 10 Z" fill="#e03030"/><path d="M10 10 L1.5 10 A8.5 8.5 0 0 1 10 1.5 Z" fill="#3070d0"/><path d="M10 10 L18.5 10 A8.5 8.5 0 0 1 10 18.5 Z" fill="#f0c020"/></svg>
<svg style="left:1897.5px;top:300.5px;" width="19" height="19" viewBox="0 0 20 20"><rect x="1.5" y="1.5" width="17" height="17" fill="#fff" stroke="#1d4f7a" stroke-width="1.2"/><rect x="1.5" y="1.5" width="17" height="3" fill="#2c7fb0"/><rect x="4" y="7" width="3" height="2" fill="#2c7fb0"/><rect x="4" y="11" width="3" height="2" fill="#2c7fb0"/><rect x="4" y="15" width="3" height="2" fill="#2c7fb0"/><path d="M9 8h7M9 12h7M9 16h7" stroke="#333"/></svg>
<svg style="left:12.5px;top:150.5px;" width="19" height="19" viewBox="0 0 20 20"><path d="M1.8 5.8 L4.9 2.3 L9.7 0.6 L14 2.3 V7.6 L18.1 8.8 V15.1 L13.1 18.2 L1.8 10.2 Z" fill="#f5d21e" stroke="#2a2008" stroke-width="1.3" stroke-linejoin="round"/><path d="M13.1 10.6 L18.1 8.8 V15.1 L13.1 18.2 Z" fill="#fbe870"/><path d="M8.8 3.9 L14 2.3 V7.6 L8.8 9 Z" fill="#fbe870"/><path d="M4.9 2.3 L8.8 3.9 V8 L13.1 10.6 V18.2 M13.1 10.6 L18.1 8.8 M8.8 3.9 L14 2.3" fill="none" stroke="#2a2008" stroke-width="1"/><path d="M1.8 5.8 L1.8 10.2 L13.1 18.2 V18.6" fill="none" stroke="#2a2008" stroke-width="1.3"/></svg>
<svg style="left:52.5px;top:150.5px;" width="19" height="19" viewBox="0 0 20 20"><rect x="1.5" y="1.5" width="17" height="17" fill="#fff" stroke="#1d4f7a" stroke-width="1.2"/><rect x="1.5" y="1.5" width="17" height="3" fill="#2c7fb0"/><rect x="4" y="7" width="3" height="2" fill="#2c7fb0"/><rect x="4" y="11" width="3" height="2" fill="#2c7fb0"/><rect x="4" y="15" width="3" height="2" fill="#2c7fb0"/><path d="M9 8h7M9 12h7M9 16h7" stroke="#333"/></svg>
<svg style="left:91.5px;top:150.5px;" width="19" height="19" viewBox="0 0 20 20"><path d="M3 2 V18 M3 5 H8 M3 15 H8" stroke="#333" stroke-width="1.5" fill="none"/><rect x="8" y="2" width="7" height="6" rx="1" fill="#fff" stroke="#333"/><rect x="10" y="11" width="7" height="7" rx="1" fill="#fff" stroke="#333"/></svg>
<svg style="left:132.5px;top:150.5px;" width="19" height="19" viewBox="0 0 20 20"><circle cx="10" cy="10" r="6.5" fill="none" stroke="#111" stroke-width="1.8"/><path d="M10 1 V19 M1 10 H19" stroke="#111" stroke-width="1.8"/></svg>
<svg style="left:172.5px;top:150.5px;" width="19" height="19" viewBox="0 0 20 20"><circle cx="10" cy="10" r="8.5" fill="#3a9a3a"/><path d="M10 10 L10 1.5 A8.5 8.5 0 0 1 18.5 10 Z" fill="#e03030"/><path d="M10 10 L1.5 10 A8.5 8.5 0 0 1 10 1.5 Z" fill="#3070d0"/><path d="M10 10 L18.5 10 A8.5 8.5 0 0 1 10 18.5 Z" fill="#f0c020"/><ellipse cx="13" cy="8" rx="3" ry="5" fill="#111" transform="rotate(-30 13 8)"/></svg>
<svg style="left:41.5px;top:310.5px;" width="19" height="19" viewBox="0 0 20 20"><path d="M3 11 V19 H10 V13 L8 11 Z" fill="#fff" stroke="#333"/><path d="M6 9 L16 3 M14 2 L17 3 L16 6 M5 8 L8 9 L7 11" stroke="#333" fill="none" stroke-width="1.3"/><path d="M3 7 Q3 3 7 3" stroke="#2c7fb0" fill="none" stroke-width="1.5"/></svg>
<svg style="left:65.5px;top:310.5px;" width="19" height="19" viewBox="0 0 20 20"><path d="M9 1 L11.5 6.5 L17.5 7 L13 11 L14.5 17 L9 14 L3.5 17 L5 11 L0.5 7 L6.5 6.5 Z" fill="#5a9ad0" stroke="#1d4f7a" stroke-width="1"/><path d="M15 11v8M11 15h8" stroke="#2a9a2a" stroke-width="2.5"/></svg>
<svg style="left:89.5px;top:310.5px;" width="19" height="19" viewBox="0 0 20 20"><path d="M9 1 L11.5 6.5 L17.5 7 L13 11 L14.5 17 L9 14 L3.5 17 L5 11 L0.5 7 L6.5 6.5 Z" fill="#5a9ad0" stroke="#1d4f7a" stroke-width="1"/><path d="M12 12l6 6M18 12l-6 6" stroke="#e02020" stroke-width="2"/></svg>
<svg style="left:113.5px;top:310.5px;" width="19" height="19" viewBox="0 0 20 20"><path d="M9 1 L11.5 6.5 L17.5 7 L13 11 L14.5 17 L9 14 L3.5 17 L5 11 L0.5 7 L6.5 6.5 Z" fill="#5a9ad0" stroke="#1d4f7a" stroke-width="1"/><rect x="10" y="10" width="9" height="9" fill="#1d4f7a"/><rect x="12" y="11" width="5" height="3" fill="#fff"/></svg>
<svg style="left:137.5px;top:310.5px;" width="19" height="19" viewBox="0 0 20 20"><path d="M9 1 L11.5 6.5 L17.5 7 L13 11 L14.5 17 L9 14 L3.5 17 L5 11 L0.5 7 L6.5 6.5 Z" fill="#5a9ad0" stroke="#1d4f7a" stroke-width="1"/><path d="M15 9v6M12 13l3 4 3-4" stroke="#222" stroke-width="2" fill="none"/></svg>
<svg style="left:9px;top:178px;" width="22" height="20" viewBox="0 0 22 20"><path d="M3 10 L10 3 M3 10 L8 17 M18 10 L11 3" stroke="#2a6a9a" stroke-width="2" fill="none"/><path d="M7 10 L15 4 M13 3 L16 3 L16 6 M7 8 L6 11 L9 11" stroke="#111" stroke-width="1.8" fill="none"/></svg>
<svg style="left:265.0px;top:129.0px;" width="18" height="18" viewBox="0 0 20 20"><path d="M1.8 5.8 L4.9 2.3 L9.7 0.6 L14 2.3 V7.6 L18.1 8.8 V15.1 L13.1 18.2 L1.8 10.2 Z" fill="#f5d21e" stroke="#2a2008" stroke-width="1.3" stroke-linejoin="round"/><path d="M13.1 10.6 L18.1 8.8 V15.1 L13.1 18.2 Z" fill="#fbe870"/><path d="M8.8 3.9 L14 2.3 V7.6 L8.8 9 Z" fill="#fbe870"/><path d="M4.9 2.3 L8.8 3.9 V8 L13.1 10.6 V18.2 M13.1 10.6 L18.1 8.8 M8.8 3.9 L14 2.3" fill="none" stroke="#2a2008" stroke-width="1"/><path d="M1.8 5.8 L1.8 10.2 L13.1 18.2 V18.6" fill="none" stroke="#2a2008" stroke-width="1.3"/></svg>
<div style="position:absolute;left:177px;top:999px;width:1px;height:32px;background:#8a8d92"></div>
<div style="position:absolute;left:336px;top:1004px;width:1px;height:23px;background:#8a8d92"></div>
<div style="position:absolute;left:1133px;top:999px;width:1px;height:32px;background:#8a8d92"></div>
<div style="position:absolute;left:265px;top:1003px;width:42px;height:26px;background:#d5d8dc;border:1px solid #8a8d92;box-sizing:border-box"></div>
<div style="position:absolute;left:266px;top:1004px;width:27px;height:24px;background:#a9acb1"></div>
<div style="position:absolute;left:293px;top:1004px;width:1px;height:24px;background:#8a8d92"></div>
<svg style="left:269.0px;top:1006.0px;" width="18" height="18" viewBox="0 0 20 20"><path d="M5 1.5 V16 L8.5 12.5 L11.5 18.5 L14 17.5 L11 11.5 H16 Z" fill="#fff" stroke="#222" stroke-width="1.2" stroke-linejoin="round"/></svg>
<svg style="left:295.5px;top:1014.0px" width="7" height="4" viewBox="0 0 7 4"><path d="M0 0 H7 L3.5 4 Z" fill="#444"/></svg>
<svg style="left:187.5px;top:1005.5px;" width="19" height="19" viewBox="0 0 20 20"><path d="M3 5 H15 L10.5 11 V17 H7.5 V11 Z" fill="none" stroke="#c4c6c9" stroke-width="1.5"/></svg>
<svg style="left:214.5px;top:1005.5px;" width="19" height="19" viewBox="0 0 20 20"><path d="M1 2 H11 L7 6 V10 H5 V6 Z M5 6 H15 L11 10 V14 H9 V10 Z M9 9 H19 L15 13 V18 H13 V13 Z" fill="#d8dadd" stroke="#c4c6c9" stroke-width="1.3"/></svg>
<svg style="left:241.5px;top:1005.5px;" width="19" height="19" viewBox="0 0 20 20"><path d="M1 2 H11 L7 6 V10 H5 V6 Z M5 6 H15 L11 10 V14 H9 V10 Z M9 9 H19 L15 13 V18 H13 V13 Z" fill="#a830d8" stroke="#5a1a6a" stroke-width="1.1"/></svg>
<svg style="left:310.5px;top:1005.5px;" width="19" height="19" viewBox="0 0 20 20"><path d="M3 1.5 V16 L6.5 12.5 L9.5 18.5 L12 17.5 L9 11.5 H14 Z" fill="#e0e0e0" stroke="#c4c6c9" stroke-width="1.2"/><path d="M12 9 L19 17" stroke="#c4c6c9" stroke-width="3"/></svg>
<svg style="left:345.5px;top:1005.5px;" width="19" height="19" viewBox="0 0 20 20"><circle cx="5" cy="6" r="2.8" fill="#4a90c8" stroke="#1d4f7a"/><path d="M13 13 H20 L17.5 16 V19 H15.5 V16 Z" fill="#a830d8"/></svg>
<svg style="left:373.5px;top:1005.5px;" width="19" height="19" viewBox="0 0 20 20"><path d="M6 2 V16" stroke="#2a6a9a" stroke-width="2"/><path d="M13 13 H20 L17.5 16 V19 H15.5 V16 Z" fill="#a830d8"/></svg>
<svg style="left:398.5px;top:1005.5px;" width="19" height="19" viewBox="0 0 20 20"><rect x="2" y="2" width="12" height="12" fill="#5aa8d8" stroke="#1d4f7a" stroke-width="1.2"/><path d="M13 13 H20 L17.5 16 V19 H15.5 V16 Z" fill="#a830d8"/></svg>
<svg style="left:426.5px;top:1005.5px;" width="19" height="19" viewBox="0 0 20 20"><path d="M1 8 Q5 2 9 6 Q13 10 17 3 V10 Q13 17 9 13 Q5 9 1 15 Z" fill="#f09020" stroke="#8a4a10"/><path d="M13 13 H20 L17.5 16 V19 H15.5 V16 Z" fill="#a830d8"/></svg>
<svg style="left:452.5px;top:1005.5px;" width="19" height="19" viewBox="0 0 20 20"><path d="M2 5 L8 2 L16 4 V13 L10 17 L2 14 Z" fill="#f0e060" stroke="#6a5a10"/><path d="M2 5 L10 8 L16 4 M10 8 V17" fill="none" stroke="#6a5a10"/><path d="M13 13 H20 L17.5 16 V19 H15.5 V16 Z" fill="#a830d8"/></svg>
<svg style="left:479.5px;top:1005.5px;" width="19" height="19" viewBox="0 0 20 20"><path d="M2 15 L16 3" stroke="#2a6a9a" stroke-width="1.8" stroke-dasharray="2 2"/><path d="M13 13 H20 L17.5 16 V19 H15.5 V16 Z" fill="#a830d8"/></svg>
<svg style="left:506.5px;top:1005.5px;" width="19" height="19" viewBox="0 0 20 20"><path d="M2 5 L12 2 V15 L2 18 Z" fill="#5aa8d8" stroke="#1d4f7a"/><path d="M7 1 V19" stroke="#333" stroke-dasharray="1.5 1"/><path d="M13 13 H20 L17.5 16 V19 H15.5 V16 Z" fill="#a830d8"/></svg>
<svg style="left:534.5px;top:1005.5px;" width="19" height="19" viewBox="0 0 20 20"><rect x="2" y="3" width="6" height="6" fill="#5aa8d8" stroke="#1d4f7a"/><path d="M13 13 H20 L17.5 16 V19 H15.5 V16 Z" fill="#a830d8"/></svg>
<svg style="left:560.5px;top:1005.5px;" width="19" height="19" viewBox="0 0 20 20"><path d="M2 2 H14 M2 2 V12 Q2 16 6 16 H14" fill="none" stroke="#2a6a9a" stroke-width="2"/><path d="M13 13 H20 L17.5 16 V19 H15.5 V16 Z" fill="#a830d8"/></svg>
<svg style="left:588.5px;top:1005.5px;" width="19" height="19" viewBox="0 0 20 20"><path d="M3 3 H15 M3 3 V17" stroke="#222" stroke-width="1.5"/><rect x="1" y="1" width="4" height="4" fill="#fff" stroke="#111"/><rect x="13" y="1" width="4" height="4" fill="#fff" stroke="#111"/><rect x="1" y="15" width="4" height="4" fill="#fff" stroke="#111"/><path d="M13 13 H20 L17.5 16 V19 H15.5 V16 Z" fill="#a830d8"/></svg>
<svg style="left:615.5px;top:1005.5px;" width="19" height="19" viewBox="0 0 20 20"><path d="M2 15 L15 3" stroke="#2a6a9a" stroke-width="2"/><circle cx="2.5" cy="14.5" r="1.5" fill="#111"/><path d="M13 13 H20 L17.5 16 V19 H15.5 V16 Z" fill="#a830d8"/></svg>
<svg style="left:642.5px;top:1005.5px;" width="19" height="19" viewBox="0 0 20 20"><circle cx="9" cy="8" r="5" fill="none" stroke="#2a6a9a" stroke-width="2"/><circle cx="9" cy="8" r="1.5" fill="#2a6a9a"/><path d="M9 0 V16 M1 8 H17" stroke="#111" stroke-width="1.3"/><path d="M13 13 H20 L17.5 16 V19 H15.5 V16 Z" fill="#a830d8"/></svg>
<svg style="left:669.5px;top:1005.5px;" width="19" height="19" viewBox="0 0 20 20"><rect x="2" y="2" width="6" height="15" fill="#fff" stroke="#555"/><rect x="8" y="5" width="8" height="8" fill="none" stroke="#555"/><path d="M1 10 H17" stroke="#2c7fb0" stroke-dasharray="2 1"/><path d="M13 13 H20 L17.5 16 V19 H15.5 V16 Z" fill="#a830d8"/></svg>
<svg style="left:696.5px;top:1005.5px;" width="19" height="19" viewBox="0 0 20 20"><path d="M3 8 L9 2 L16 9 L10 15 Z" fill="#fff" stroke="#222" stroke-width="1.5"/><circle cx="8" cy="6" r="1.5" fill="#222"/><path d="M13 13 H20 L17.5 16 V19 H15.5 V16 Z" fill="#a830d8"/></svg>
<svg style="left:723.5px;top:1005.5px;" width="19" height="19" viewBox="0 0 20 20"><path d="M1 8 L4 16 L12 2 H17" fill="none" stroke="#111" stroke-width="1.8"/><path d="M13 13 H20 L17.5 16 V19 H15.5 V16 Z" fill="#a830d8"/></svg>
<svg style="left:750.5px;top:1005.5px;" width="19" height="19" viewBox="0 0 20 20"><rect x="1" y="3" width="17" height="9" fill="#fff" stroke="#111"/><path d="M7 3 V12 M10 3 V12" stroke="#111"/><text x="10.5" y="10.5" font-family="Liberation Sans" font-size="5.5">03</text><ellipse cx="4" cy="7.5" rx="1.8" ry="1.3" fill="none" stroke="#111"/><path d="M13 13 H20 L17.5 16 V19 H15.5 V16 Z" fill="#a830d8"/></svg>
<svg style="left:777.5px;top:1005.5px;" width="19" height="19" viewBox="0 0 20 20"><circle cx="11" cy="7" r="6" fill="#fff" stroke="#111" stroke-width="1.3"/><text x="8.5" y="10" font-family="Liberation Sans" font-size="8">N</text><path d="M7 11 L1 17" stroke="#111" stroke-width="2"/><path d="M13 13 H20 L17.5 16 V19 H15.5 V16 Z" fill="#a830d8"/></svg>
<svg style="left:804.5px;top:1005.5px;" width="19" height="19" viewBox="0 0 20 20"><rect x="2" y="1" width="13" height="14" fill="#fff" stroke="#111"/><text x="4.5" y="13" font-family="Liberation Serif" font-weight="bold" font-size="13">A</text><path d="M5 19 L8.5 15 L12 19 Z" fill="#111"/><path d="M13 13 H20 L17.5 16 V19 H15.5 V16 Z" fill="#a830d8"/></svg>
<svg style="left:831.5px;top:1005.5px;" width="19" height="19" viewBox="0 0 20 20"><path d="M1 15 L6 5 H18 M8 5 L12 0 L14 5 L18 1" fill="none" stroke="#111" stroke-width="1.8"/><path d="M13 13 H20 L17.5 16 V19 H15.5 V16 Z" fill="#a830d8"/></svg>
<svg style="left:858.5px;top:1005.5px;" width="19" height="19" viewBox="0 0 20 20"><path d="M3 2 V10 H10 M3 2 L8 7" stroke="#2c7fb0" fill="none" stroke-width="1.2"/><path d="M2 13 Q4 16 2 19 M5 13 Q7 16 5 19 M8 13 Q10 16 8 19" stroke="#333" fill="none"/><path d="M13 13 H20 L17.5 16 V19 H15.5 V16 Z" fill="#a830d8"/></svg>
<svg style="left:885.5px;top:1005.5px;" width="19" height="19" viewBox="0 0 20 20"><circle cx="10" cy="9" r="7" fill="none" stroke="#333" stroke-width="1.4"/><path d="M3 9 H17" stroke="#333"/><text x="6" y="15" font-family="Liberation Sans" font-size="7">A1</text><path d="M5 14 L1 18" stroke="#111" stroke-width="2"/><path d="M13 13 H20 L17.5 16 V19 H15.5 V16 Z" fill="#a830d8"/></svg>
<svg style="left:912.5px;top:1005.5px;" width="19" height="19" viewBox="0 0 20 20"><path d="M4 1 H15 V12 L9.5 18 L4 12 Z" fill="#fff" stroke="#111" stroke-width="1.2" stroke-dasharray="2 1"/><path d="M13 13 H20 L17.5 16 V19 H15.5 V16 Z" fill="#a830d8"/></svg>
<svg style="left:938.5px;top:1005.5px;" width="19" height="19" viewBox="0 0 20 20"><rect x="2" y="1" width="13" height="13" fill="#fff" stroke="#111"/><text x="3.5" y="12" font-family="Liberation Serif" font-size="12">A</text><circle cx="13" cy="4" r="1.5" fill="none" stroke="#111"/><path d="M13 13 H20 L17.5 16 V19 H15.5 V16 Z" fill="#a830d8"/></svg>
<svg style="left:965.5px;top:1005.5px;" width="19" height="19" viewBox="0 0 20 20"><circle cx="9" cy="8" r="7" fill="#fff" stroke="#111" stroke-width="1.3"/><path d="M9 8 V1 A7 7 0 0 1 16 8 Z M9 8 V15 A7 7 0 0 1 2 8 Z" fill="#111"/><path d="M13 13 H20 L17.5 16 V19 H15.5 V16 Z" fill="#a830d8"/></svg>
<svg style="left:993.5px;top:1005.5px;" width="19" height="19" viewBox="0 0 20 20"><path d="M1 6 H12" stroke="#111" stroke-width="1.5"/><rect x="11" y="2" width="7" height="7" fill="#5aa8d8" stroke="#1d4f7a"/><path d="M13 13 H20 L17.5 16 V19 H15.5 V16 Z" fill="#a830d8"/></svg>
<svg style="left:1020.5px;top:1005.5px;" width="19" height="19" viewBox="0 0 20 20"><path d="M1 6 H18" stroke="#111" stroke-width="1.5"/><rect x="6" y="2" width="7" height="7" fill="#5aa8d8" stroke="#1d4f7a"/><path d="M13 13 H20 L17.5 16 V19 H15.5 V16 Z" fill="#a830d8"/></svg>
<svg style="left:1047.5px;top:1005.5px;" width="19" height="19" viewBox="0 0 20 20"><rect x="1" y="2" width="16" height="12" fill="#5aa8d8" stroke="#1d4f7a"/><path d="M9 10 L14 4 L18 8 L13 14 Z" fill="#fff" stroke="#333" stroke-width="0.8"/><path d="M13 13 H20 L17.5 16 V19 H15.5 V16 Z" fill="#a830d8"/></svg>
<svg style="left:1075.5px;top:1005.5px;" width="19" height="19" viewBox="0 0 20 20"><path d="M2 2 V17" stroke="#2a6a9a" stroke-width="2"/><path d="M8 10 L13 3 L18 8 L13 14 Z" fill="#fff" stroke="#333" stroke-width="0.9"/><path d="M13 13 H20 L17.5 16 V19 H15.5 V16 Z" fill="#a830d8"/></svg>
<svg style="left:1102.5px;top:1005.5px;" width="19" height="19" viewBox="0 0 20 20"><circle cx="3" cy="6" r="2.5" fill="#4a90c8" stroke="#1d4f7a"/><path d="M8 10 L13 3 L18 8 L13 14 Z" fill="#fff" stroke="#333" stroke-width="0.9"/><path d="M13 13 H20 L17.5 16 V19 H15.5 V16 Z" fill="#a830d8"/></svg>
<div style="position:absolute;left:303px;top:36px;width:300px;height:868px;background:#f0f0f5;border:1px solid #a8a8ac;border-right:none;border-bottom:none;box-sizing:border-box;box-shadow:3px 3px 1.5px rgba(0,0,0,0.43)"></div>
<div class="t" style="left:337px;top:43.84px;font-size:12px;color:#000">Bossage/Base</div>
<svg style="left:586px;top:46.5px;" width="6" height="9" viewBox="0 0 6 9"><path d="M1 0.5 L5.5 4.5 L1 8.5 Z" fill="#444"/></svg>
<div class="t" style="left:337px;top:67.84px;font-size:12px;color:#000">Enlèvement de matière</div>
<svg style="left:586px;top:70.5px;" width="6" height="9" viewBox="0 0 6 9"><path d="M1 0.5 L5.5 4.5 L1 8.5 Z" fill="#444"/></svg>
<div class="t" style="left:337px;top:91.84px;font-size:12px;color:#000">Fonctions</div>
<svg style="left:586px;top:94.5px;" width="6" height="9" viewBox="0 0 6 9"><path d="M1 0.5 L5.5 4.5 L1 8.5 Z" fill="#444"/></svg>
<div class="t" style="left:337px;top:115.84px;font-size:12px;color:#000">Répétition/Symétrie</div>
<svg style="left:586px;top:118.5px;" width="6" height="9" viewBox="0 0 6 9"><path d="M1 0.5 L5.5 4.5 L1 8.5 Z" fill="#444"/></svg>
<div class="t" style="left:337px;top:139.84px;font-size:12px;color:#000">Fonction de fixation</div>
<svg style="left:586px;top:142.5px;" width="6" height="9" viewBox="0 0 6 9"><path d="M1 0.5 L5.5 4.5 L1 8.5 Z" fill="#444"/></svg>
<div class="t" style="left:337px;top:163.84px;font-size:12px;color:#000">FeatureWorks</div>
<svg style="left:586px;top:166.5px;" width="6" height="9" viewBox="0 0 6 9"><path d="M1 0.5 L5.5 4.5 L1 8.5 Z" fill="#444"/></svg>
<div style="position:absolute;left:337px;top:188px;width:261px;height:1px;background:#c9c9cf"></div>
<div class="t" style="left:337px;top:197.84px;font-size:12px;color:#000">Surface</div>
<svg style="left:586px;top:200.5px;" width="6" height="9" viewBox="0 0 6 9"><path d="M1 0.5 L5.5 4.5 L1 8.5 Z" fill="#444"/></svg>
<div class="t" style="left:337px;top:221.84px;font-size:12px;color:#000">Face</div>
<svg style="left:586px;top:224.5px;" width="6" height="9" viewBox="0 0 6 9"><path d="M1 0.5 L5.5 4.5 L1 8.5 Z" fill="#444"/></svg>
<div class="t" style="left:337px;top:245.84px;font-size:12px;color:#000">Courbe</div>
<svg style="left:586px;top:248.5px;" width="6" height="9" viewBox="0 0 6 9"><path d="M1 0.5 L5.5 4.5 L1 8.5 Z" fill="#444"/></svg>
<div class="t" style="left:337px;top:269.84px;font-size:12px;color:#000">Géométrie de référence</div>
<svg style="left:586px;top:272.5px;" width="6" height="9" viewBox="0 0 6 9"><path d="M1 0.5 L5.5 4.5 L1 8.5 Z" fill="#444"/></svg>
<div style="position:absolute;left:337px;top:294px;width:261px;height:1px;background:#c9c9cf"></div>
<div class="t" style="left:337px;top:303.84px;font-size:12px;color:#000">Tôlerie</div>
<svg style="left:586px;top:306.5px;" width="6" height="9" viewBox="0 0 6 9"><path d="M1 0.5 L5.5 4.5 L1 8.5 Z" fill="#444"/></svg>
<div class="t" style="left:337px;top:327.84px;font-size:12px;color:#000">Système de structures</div>
<svg style="left:586px;top:330.5px;" width="6" height="9" viewBox="0 0 6 9"><path d="M1 0.5 L5.5 4.5 L1 8.5 Z" fill="#444"/></svg>
<div class="t" style="left:337px;top:351.84px;font-size:12px;color:#000">Constructions soudées</div>
<svg style="left:586px;top:354.5px;" width="6" height="9" viewBox="0 0 6 9"><path d="M1 0.5 L5.5 4.5 L1 8.5 Z" fill="#444"/></svg>
<div class="t" style="left:337px;top:375.84px;font-size:12px;color:#000">Moules</div>
<svg style="left:586px;top:378.5px;" width="6" height="9" viewBox="0 0 6 9"><path d="M1 0.5 L5.5 4.5 L1 8.5 Z" fill="#444"/></svg>
<div class="t" style="left:337px;top:399.84px;font-size:12px;color:#000">Maillage</div>
<svg style="left:586px;top:402.5px;" width="6" height="9" viewBox="0 0 6 9"><path d="M1 0.5 L5.5 4.5 L1 8.5 Z" fill="#444"/></svg>
<div style="position:absolute;left:337px;top:424px;width:261px;height:1px;background:#c9c9cf"></div>
<div class="t" style="left:337px;top:433.84px;font-size:12px;color:#000">Vue éclatée...</div>
<svg style="left:310.5px;top:432.5px;" width="19" height="19" viewBox="0 0 20 20"><g transform="translate(0,6) scale(0.7)"><path d="M1.8 5.8 L4.9 2.3 L9.7 0.6 L14 2.3 V7.6 L18.1 8.8 V15.1 L13.1 18.2 L1.8 10.2 Z" fill="#f5d21e" stroke="#2a2008" stroke-width="1.3" stroke-linejoin="round"/><path d="M13.1 10.6 L18.1 8.8 V15.1 L13.1 18.2 Z" fill="#fbe870"/><path d="M8.8 3.9 L14 2.3 V7.6 L8.8 9 Z" fill="#fbe870"/><path d="M4.9 2.3 L8.8 3.9 V8 L13.1 10.6 V18.2 M13.1 10.6 L18.1 8.8 M8.8 3.9 L14 2.3" fill="none" stroke="#2a2008" stroke-width="1"/><path d="M1.8 5.8 L1.8 10.2 L13.1 18.2 V18.6" fill="none" stroke="#2a2008" stroke-width="1.3"/></g><path d="M9 12 H15 V7" fill="none" stroke="#111" stroke-width="1.3" stroke-dasharray="1.6 1.2"/><path d="M12 0.5 H19 V4.5 L17 6.5 H14 L12 4.5 Z" fill="#3aa0d0" stroke="#1a3a5a" stroke-width="1"/></svg>
<div class="t" style="left:337px;top:457.84px;font-size:12px;color:#8e8e93">Esquisse avec lignes d'éclatement</div>
<svg style="left:310.5px;top:456.5px;" width="19" height="19" viewBox="0 0 20 20"><g transform="translate(0,6) scale(0.7)"><path d="M1.8 5.8 L4.9 2.3 L9.7 0.6 L14 2.3 V7.6 L18.1 8.8 V15.1 L13.1 18.2 L1.8 10.2 Z" fill="none" stroke="#c4c6c9" stroke-width="1.3" stroke-linejoin="round"/><path d="M13.1 10.6 L18.1 8.8 V15.1 L13.1 18.2 Z" fill="#fbe870"/><path d="M8.8 3.9 L14 2.3 V7.6 L8.8 9 Z" fill="#fbe870"/><path d="M4.9 2.3 L8.8 3.9 V8 L13.1 10.6 V18.2 M13.1 10.6 L18.1 8.8 M8.8 3.9 L14 2.3" fill="none" stroke="#c4c6c9" stroke-width="1"/><path d="M1.8 5.8 L1.8 10.2 L13.1 18.2 V18.6" fill="none" stroke="#c4c6c9" stroke-width="1.3"/></g><path d="M9 12 H15 V7" fill="none" stroke="#c4c6c9" stroke-width="1.3" stroke-dasharray="1.6 1.2"/><circle cx="16" cy="3.5" r="3" fill="none" stroke="#c4c6c9"/></svg>
<div class="t" style="left:337px;top:481.84px;font-size:12px;color:#000">Vue de cassure du modèle...</div>
<svg style="left:310.5px;top:480.5px;" width="19" height="19" viewBox="0 0 20 20"><path d="M1.5 1.5 H8 V8 L5.5 10 L8 9.5 V18.5 H1.5 Z" fill="#eee" stroke="#222" stroke-width="1.2"/><path d="M11 1.5 H17.5 V18.5 H11 V11 L13.5 9 L11 9.5 Z" fill="#eee" stroke="#222" stroke-width="1.2"/></svg>
<div class="t" style="left:337px;top:505.84px;font-size:12px;color:#000">Pièce...</div>
<svg style="left:310.5px;top:504.5px;" width="19" height="19" viewBox="0 0 20 20"><path d="M1.5 18.5 L4 12.5 H15 L12.5 18.5 Z M1.5 18.5 V11.5 H6" fill="#fff" stroke="#222" stroke-width="1.3" stroke-linejoin="round"/><path d="M3.5 11 V5.5 H7" fill="none" stroke="#2a9a2a" stroke-width="2.2"/><path d="M6.5 2.5 L10 5.5 L6.5 8.5 Z" fill="#2a9a2a"/><g transform="translate(8,0) scale(0.65)"><path d="M1.8 5.8 L4.9 2.3 L9.7 0.6 L14 2.3 V7.6 L18.1 8.8 V15.1 L13.1 18.2 L1.8 10.2 Z" fill="#f5d21e" stroke="#2a2008" stroke-width="1.3" stroke-linejoin="round"/><path d="M13.1 10.6 L18.1 8.8 V15.1 L13.1 18.2 Z" fill="#fbe870"/><path d="M8.8 3.9 L14 2.3 V7.6 L8.8 9 Z" fill="#fbe870"/><path d="M4.9 2.3 L8.8 3.9 V8 L13.1 10.6 V18.2 M13.1 10.6 L18.1 8.8 M8.8 3.9 L14 2.3" fill="none" stroke="#2a2008" stroke-width="1"/><path d="M1.8 5.8 L1.8 10.2 L13.1 18.2 V18.6" fill="none" stroke="#2a2008" stroke-width="1.3"/></g></svg>
<div class="t" style="left:337px;top:529.84px;font-size:12px;color:#8e8e93">Pièce symétrique...</div>
<div style="position:absolute;left:337px;top:554px;width:261px;height:1px;background:#c9c9cf"></div>
<div class="t" style="left:337px;top:563.84px;font-size:12px;color:#000">Esquisse</div>
<svg style="left:310.5px;top:562.5px;" width="19" height="19" viewBox="0 0 20 20"><path d="M3 2 V18 H18" fill="none" stroke="#2a7a9a" stroke-width="2"/><path d="M3 2 H10 M18 11 V18" stroke="#2a7a9a" stroke-width="1.2"/><path d="M6 6h10M6 10h10M6 14h10M9 4v12M13 4v12" stroke="#cde" stroke-width="0.6"/></svg>
<div class="t" style="left:337px;top:587.84px;font-size:12px;color:#000">Esquisse 3D</div>
<svg style="left:310.5px;top:586.5px;" width="19" height="19" viewBox="0 0 20 20"><path d="M3 2 V18 H18" fill="none" stroke="#2a7a9a" stroke-width="2"/><path d="M3 2 H10 M18 11 V18" stroke="#2a7a9a" stroke-width="1.2"/><text x="5" y="15" font-family="Liberation Sans" font-weight="bold" font-size="9" fill="#222">3D</text></svg>
<div class="t" style="left:337px;top:611.84px;font-size:12px;color:#000">Esquisse 3D sur un plan</div>
<svg style="left:310.5px;top:610.5px;" width="19" height="19" viewBox="0 0 20 20"><path d="M2 3 L14 1 V14 L2 16 Z" fill="#d8e8f0" stroke="#333"/><path d="M5 5 V17 H12" stroke="#2a7a9a" stroke-width="2" fill="none"/><text x="9" y="19" font-family="Liberation Sans" font-weight="bold" font-size="7" fill="#222">3D</text></svg>
<div class="t" style="left:337px;top:635.84px;font-size:12px;color:#8e8e93">Esquisse dérivée</div>
<div class="t" style="left:337px;top:659.84px;font-size:12px;color:#8e8e93">Esquisse provenant d'une mise en plan</div>
<div class="t" style="left:337px;top:683.84px;font-size:12px;color:#000">Découpe...</div>
<svg style="left:310.5px;top:682.5px;" width="19" height="19" viewBox="0 0 20 20"><path d="M2 6 L10 2 L18 6 L10 10 Z" fill="#8ab8c8" stroke="#333"/><path d="M2 10 L10 14 L18 10 M2 14 L10 18 L18 14 M2 6 V14 M18 6 V14" fill="none" stroke="#333"/></svg>
<div class="t" style="left:337px;top:707.84px;font-size:12px;color:#000">DXF/DWG...</div>
<div class="t" style="left:337px;top:731.84px;font-size:12px;color:#000">Etude de conception</div>
<svg style="left:586px;top:734.5px;" width="6" height="9" viewBox="0 0 6 9"><path d="M1 0.5 L5.5 4.5 L1 8.5 Z" fill="#444"/></svg>
<div style="position:absolute;left:337px;top:756px;width:261px;height:1px;background:#c9c9cf"></div>
<div class="t" style="left:337px;top:765.84px;font-size:12px;color:#000">Tables</div>
<svg style="left:586px;top:768.5px;" width="6" height="9" viewBox="0 0 6 9"><path d="M1 0.5 L5.5 4.5 L1 8.5 Z" fill="#444"/></svg>
<div style="position:absolute;left:307px;top:787px;width:292px;height:25px;background:#f7f7fa;border:1px solid #b9b9bf;box-sizing:border-box"></div>
<div class="t" style="left:337px;top:789.84px;font-size:12px;color:#000">Annotations</div>
<svg style="left:586px;top:792.5px;" width="6" height="9" viewBox="0 0 6 9"><path d="M1 0.5 L5.5 4.5 L1 8.5 Z" fill="#444"/></svg>
<div style="position:absolute;left:337px;top:814px;width:261px;height:1px;background:#c9c9cf"></div>
<div class="t" style="left:337px;top:823.84px;font-size:12px;color:#000">Objet...</div>
<div class="t" style="left:337px;top:847.84px;font-size:12px;color:#000">Lien hypertexte...</div>
<svg style="left:310.5px;top:846.5px;" width="19" height="19" viewBox="0 0 20 20"><circle cx="9" cy="8" r="7.5" fill="#5aa0d0" stroke="#1d4f7a"/><path d="M4 5 Q8 8 6 12 M11 2 Q13 6 15 5" stroke="#fff" fill="none" stroke-width="1.3"/><path d="M10 15 Q10 11 14 12 L17 13 Q19 15 16 17 L12 18 Q9 18 10 15" fill="none" stroke="#222" stroke-width="1.8"/></svg>
<div style="position:absolute;left:337px;top:872px;width:261px;height:1px;background:#c9c9cf"></div>
<div class="t" style="left:337px;top:881.84px;font-size:12px;color:#000">Personnaliser le menu</div>
<div style="position:absolute;left:598px;top:499px;width:265px;height:313px;background:#f0f0f5;border:1px solid #a8a8ac;border-right:none;border-bottom:none;box-sizing:border-box;box-shadow:3px 3px 1.5px rgba(0,0,0,0.43)"></div>
<div class="t" style="left:632px;top:505.84px;font-size:12px;color:#000">Note...</div>
<svg style="left:604.5px;top:504.5px;" width="19" height="19" viewBox="0 0 20 20"><path d="M1 18 L8 1 H11 L18 18" fill="none" stroke="#1d5c7c" stroke-width="3"/><path d="M5 11 H14" stroke="#1d5c7c" stroke-width="2"/><path d="M0 18.5 H6 M13 18.5 H20" stroke="#0d2c3c" stroke-width="2"/><path d="M3 17 L9 3" stroke="#6ac" stroke-width="1"/></svg>
<div class="t" style="left:632px;top:529.84px;font-size:12px;color:#8e8e93">Bulle...</div>
<svg style="left:604.5px;top:528.5px;" width="19" height="19" viewBox="0 0 20 20"><circle cx="12" cy="7" r="6" fill="none" stroke="#c4c6c9" stroke-width="1.2"/><text x="10" y="10" font-family="Liberation Sans" font-size="8" fill="#c4c6c9">1</text><path d="M8 11 L2 18" stroke="#c4c6c9" stroke-width="2"/></svg>
<div class="t" style="left:632px;top:553.84px;font-size:12px;color:#8e8e93">Bulles empilées...</div>
<svg style="left:604.5px;top:552.5px;" width="19" height="19" viewBox="0 0 20 20"><circle cx="5" cy="4" r="3" fill="none" stroke="#c4c6c9"/><circle cx="11" cy="4" r="3" fill="none" stroke="#c4c6c9"/><circle cx="17" cy="4" r="3" fill="none" stroke="#c4c6c9"/><path d="M5 7 L2 19" stroke="#c4c6c9" stroke-width="1.3"/></svg>
<div class="t" style="left:632px;top:577.84px;font-size:12px;color:#000">Symbole d'état de surface...</div>
<svg style="left:604.5px;top:576.5px;" width="19" height="19" viewBox="0 0 20 20"><path d="M1 10 L6 18 L16 1 H20" fill="none" stroke="#111" stroke-width="2"/><path d="M4 11 H9" stroke="#111" stroke-width="1.5"/></svg>
<div class="t" style="left:632px;top:601.84px;font-size:12px;color:#8e8e93">Symbole de soudure...</div>
<svg style="left:604.5px;top:600.5px;" width="19" height="19" viewBox="0 0 20 20"><path d="M1 17 L5 9 H19 M8 9 L12 3 L14 9 L18 4" fill="none" stroke="#c4c6c9" stroke-width="1.5"/></svg>
<div style="position:absolute;left:601px;top:622px;width:259px;height:24px;background:#f5f5f8;border:1px solid #b9b9bf;box-sizing:border-box"></div>
<div class="t" style="left:632px;top:625.84px;font-size:12px;color:#000">Tolérance géométrique...</div>
<svg style="left:604.5px;top:624.5px;" width="19" height="19" viewBox="0 0 20 20"><rect x="0.5" y="5" width="19" height="9" fill="#fff" stroke="#111" stroke-width="1.1"/><path d="M7 5 V14 M10.5 5 V14" stroke="#111"/><ellipse cx="4" cy="9.5" rx="2" ry="1.5" fill="none" stroke="#111"/><text x="11" y="12.5" font-family="Liberation Sans" font-size="6" fill="#111">0.3</text></svg>
<div class="t" style="left:632px;top:649.84px;font-size:12px;color:#8e8e93">Repère d'élément de référence...</div>
<svg style="left:604.5px;top:648.5px;" width="19" height="19" viewBox="0 0 20 20"><rect x="4" y="1" width="12" height="13" fill="none" stroke="#c4c6c9"/><text x="6" y="12" font-family="Liberation Sans" font-size="11" fill="#c4c6c9">A</text><path d="M10 14 V16 M6 19 L10 15 L14 19 Z" fill="#c4c6c9" stroke="#c4c6c9"/></svg>
<div class="t" style="left:632px;top:673.84px;font-size:12px;color:#8e8e93">Cible de référence...</div>
<svg style="left:604.5px;top:672.5px;" width="19" height="19" viewBox="0 0 20 20"><circle cx="12" cy="9" r="7" fill="none" stroke="#c4c6c9" stroke-width="1.3"/><path d="M5 9 H19" stroke="#c4c6c9"/><text x="8" y="15" font-family="Liberation Sans" font-size="6" fill="#c4c6c9">A1</text><path d="M7 14 L2 19" stroke="#c4c6c9" stroke-width="1.5"/></svg>
<div class="t" style="left:632px;top:697.84px;font-size:12px;color:#000">Représentation de filetage...</div>
<svg style="left:604.5px;top:696.5px;" width="19" height="19" viewBox="0 0 20 20"><path d="M4 1 H16 V13 L10 19 L4 13 Z" fill="#fff" stroke="#111" stroke-width="1.3" stroke-dasharray="2 1"/><path d="M6 3 V13 L10 17 L14 13 V3" fill="#fff" stroke="#111" stroke-width="1.3"/></svg>
<div style="position:absolute;left:632px;top:722px;width:227px;height:1px;background:#c9c9cf"></div>
<div class="t" style="left:632px;top:731.84px;font-size:12px;color:#8e8e93">Zone hachurée/Remplir</div>
<svg style="left:604.5px;top:730.5px;" width="19" height="19" viewBox="0 0 20 20"><rect x="1" y="1" width="18" height="18" fill="#c8cacd"/><path d="M1 11 L11 1 M1 19 L19 1 M9 19 L19 9" stroke="#e8e8e8" stroke-width="2"/></svg>
<div class="t" style="left:632px;top:755.84px;font-size:12px;color:#8e8e93">Label de position</div>
<svg style="left:604.5px;top:754.5px;" width="19" height="19" viewBox="0 0 20 20"><path d="M10 19 L4 9 A6.5 6.5 0 1 1 16 9 Z" fill="#d0d2d5" stroke="#c4c6c9"/><circle cx="10" cy="7" r="2.5" fill="#fff"/></svg>
<div style="position:absolute;left:632px;top:780px;width:227px;height:1px;background:#c9c9cf"></div>
<div class="t" style="left:632px;top:789.84px;font-size:12px;color:#000">Personnaliser le menu</div>
<svg style="left:0;top:0;z-index:10" width="1920" height="1080" viewBox="0 0 1920 1080"><defs><filter id="sh" x="-20%" y="-20%" width="140%" height="140%"><feDropShadow dx="1.5" dy="1.5" stdDeviation="1.2" flood-color="#000" flood-opacity="0.4"/></filter></defs><rect x="303.5" y="4.5" width="66" height="30" rx="6" fill="none" stroke="#cc1a24" stroke-width="2.6" filter="url(#sh)"/><rect x="308.0" y="781.5" width="293.20000000000005" height="32.60000000000002" rx="6" fill="none" stroke="#cc1a24" stroke-width="2.6" filter="url(#sh)"/><rect x="594.1" y="615.8" width="179.19999999999993" height="30.800000000000068" rx="6" fill="none" stroke="#cc1a24" stroke-width="2.6" filter="url(#sh)"/><rect x="272.5" y="9.5" width="26" height="27" fill="#fff" stroke="#e8000a" stroke-width="3" filter="url(#sh)"/><text x="285.5" y="31.0" text-anchor="middle" font-family="Liberation Sans" font-weight="normal" font-size="18" fill="#e8000a">1</text><rect x="282.5" y="783.5" width="20.5" height="35.5" fill="#fff" stroke="#e8000a" stroke-width="3" filter="url(#sh)"/><text x="292.8" y="805.0" text-anchor="middle" font-family="Liberation Sans" font-weight="normal" font-size="18" fill="#e8000a">2</text><rect x="564.5" y="620.5" width="19" height="26.5" fill="#fff" stroke="#e8000a" stroke-width="3" filter="url(#sh)"/><text x="574.0" y="641.5" text-anchor="middle" font-family="Liberation Sans" font-weight="normal" font-size="18" fill="#e8000a">3</text><rect x="1108.9" y="381.9" width="25.899999999999864" height="27.30000000000001" fill="#fff" stroke="#e8000a" stroke-width="3" filter="url(#sh)"/><text x="1121.8" y="402.5" text-anchor="middle" font-family="Liberation Sans" font-weight="bold" font-size="18" fill="#e8000a">4</text><g filter="url(#sh)"><line x1="766.8" y1="633.8" x2="1036" y2="432" stroke="#e8000a" stroke-width="3.2" stroke-linecap="round"/><polygon points="1054,421.9 1029.6,431.5 1037,440.4" fill="#e8000a" stroke="#e8000a" stroke-width="2" stroke-linejoin="round"/></g></svg>
</body></html>
